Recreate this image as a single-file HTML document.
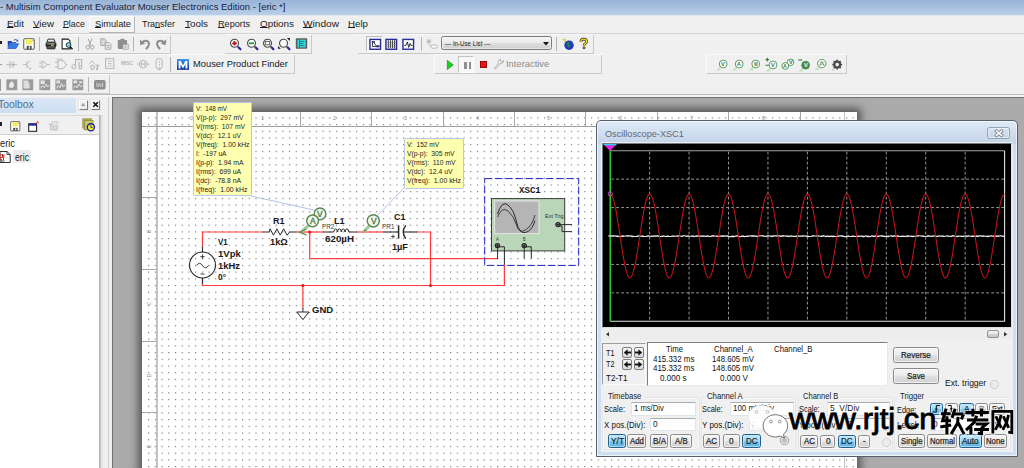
<!DOCTYPE html>
<html>
<head>
<meta charset="utf-8">
<title>Multisim</title>
<style>
html,body{margin:0;padding:0;}
body{width:1024px;height:468px;overflow:hidden;background:#f0f0f0;font-family:"Liberation Sans",sans-serif;font-size:12px;color:#000;position:relative;}
svg{display:block;}
</style>
</head>
<body>
<!-- chrome -->
<div style="position:absolute;left:0.00px;top:0.00px;width:1024.00px;height:15.00px;background:linear-gradient(#98b3d6 0%,#a6bfde 45%,#b9d0e9 100%);"></div>
<span style="position:absolute;left:0.00px;top:1.56px;font-size:9.80px;line-height:9.80px;white-space:pre;color:#17213a;font-family:'Liberation Sans',sans-serif;transform-origin:0 50%;transform:scaleX(0.9689);">- Multisim Component Evaluator Mouser Electronics Edition - [eric *]</span>
<div style="position:absolute;left:0.00px;top:15.00px;width:1024.00px;height:1.00px;background:#dfe7f1;"></div>
<div style="position:absolute;left:0.00px;top:16.00px;width:1024.00px;height:17.00px;background:#f0f0f0;"></div>
<div style="position:absolute;left:89.00px;top:16.00px;width:46.00px;height:17.00px;background:#f4f4f4;box-sizing:border-box;border:1px solid;border-color:#fcfcfc #b5b5b5 #b5b5b5 #fcfcfc;"></div>
<span style="position:absolute;left:7.00px;top:18.76px;font-size:9.50px;line-height:9.50px;white-space:pre;color:#1c1c1c;font-family:'Liberation Sans',sans-serif;transform-origin:0 50%;transform:scaleX(1.0385);text-underline-offset:0.3px;text-decoration-thickness:.9px;text-decoration-color:#8c8c8c;"><u>E</u>dit</span>
<span style="position:absolute;left:33.00px;top:18.76px;font-size:9.50px;line-height:9.50px;white-space:pre;color:#1c1c1c;font-family:'Liberation Sans',sans-serif;transform-origin:0 50%;transform:scaleX(1.0284);text-underline-offset:0.3px;text-decoration-thickness:.9px;text-decoration-color:#8c8c8c;"><u>V</u>iew</span>
<span style="position:absolute;left:63.00px;top:18.76px;font-size:9.50px;line-height:9.50px;white-space:pre;color:#1c1c1c;font-family:'Liberation Sans',sans-serif;transform-origin:0 50%;transform:scaleX(0.9257);text-underline-offset:0.3px;text-decoration-thickness:.9px;text-decoration-color:#8c8c8c;"><u>P</u>lace</span>
<span style="position:absolute;left:95.00px;top:18.76px;font-size:9.50px;line-height:9.50px;white-space:pre;color:#1c1c1c;font-family:'Liberation Sans',sans-serif;transform-origin:0 50%;transform:scaleX(0.9740);text-underline-offset:0.3px;text-decoration-thickness:.9px;text-decoration-color:#8c8c8c;"><u>S</u>imulate</span>
<span style="position:absolute;left:142.00px;top:18.76px;font-size:9.50px;line-height:9.50px;white-space:pre;color:#1c1c1c;font-family:'Liberation Sans',sans-serif;transform-origin:0 50%;transform:scaleX(0.9424);text-underline-offset:0.3px;text-decoration-thickness:.9px;text-decoration-color:#8c8c8c;">Tra<u>n</u>sfer</span>
<span style="position:absolute;left:185.00px;top:18.76px;font-size:9.50px;line-height:9.50px;white-space:pre;color:#1c1c1c;font-family:'Liberation Sans',sans-serif;transform-origin:0 50%;transform:scaleX(1.0371);text-underline-offset:0.3px;text-decoration-thickness:.9px;text-decoration-color:#8c8c8c;"><u>T</u>ools</span>
<span style="position:absolute;left:218.00px;top:18.76px;font-size:9.50px;line-height:9.50px;white-space:pre;color:#1c1c1c;font-family:'Liberation Sans',sans-serif;transform-origin:0 50%;transform:scaleX(0.9620);text-underline-offset:0.3px;text-decoration-thickness:.9px;text-decoration-color:#8c8c8c;"><u>R</u>eports</span>
<span style="position:absolute;left:260.00px;top:18.76px;font-size:9.50px;line-height:9.50px;white-space:pre;color:#1c1c1c;font-family:'Liberation Sans',sans-serif;transform-origin:0 50%;transform:scaleX(1.0385);text-underline-offset:0.3px;text-decoration-thickness:.9px;text-decoration-color:#8c8c8c;"><u>O</u>ptions</span>
<span style="position:absolute;left:303.00px;top:18.76px;font-size:9.50px;line-height:9.50px;white-space:pre;color:#1c1c1c;font-family:'Liberation Sans',sans-serif;transform-origin:0 50%;transform:scaleX(1.0654);text-underline-offset:0.3px;text-decoration-thickness:.9px;text-decoration-color:#8c8c8c;"><u>W</u>indow</span>
<span style="position:absolute;left:348.00px;top:18.76px;font-size:9.50px;line-height:9.50px;white-space:pre;color:#1c1c1c;font-family:'Liberation Sans',sans-serif;transform-origin:0 50%;transform:scaleX(1.0236);text-underline-offset:0.3px;text-decoration-thickness:.9px;text-decoration-color:#8c8c8c;"><u>H</u>elp</span>
<div style="position:absolute;left:0.00px;top:33.00px;width:1024.00px;height:1.00px;background:#d2d2d2;"></div>
<!-- toolbars -->
<div style="position:absolute;left:0.00px;top:34.00px;width:171.00px;height:20.00px;background:#f0f0f0;"></div>
<div style="position:absolute;left:0.00px;top:53.00px;width:171.00px;height:1.00px;background:#c9c9c9;"></div>
<div style="position:absolute;left:170.00px;top:34.00px;width:1.00px;height:20.00px;background:#c9c9c9;"></div>
<div style="position:absolute;left:0.00px;top:34.00px;width:171.00px;height:1.00px;background:#f9f9f9;"></div>
<div style="position:absolute;left:0.00px;top:41.00px;width:2.00px;height:3.00px;background:#222;"></div>
<svg style="position:absolute;left:6.50px;top:37.50px;overflow:visible" width="12.00" height="12.00" viewBox="0 0 16 16"><path d="M1 4h5l1 1.5h5V7H4L1 13z" fill="#1c3fb5"/><path d="M4.2 7.5H15.5L12 14H1z" fill="#2f7de6" stroke="#1c3fb5" stroke-width=".8"/><path d="M9 3q3-2.5 5 .5" fill="none" stroke="#2a55c8" stroke-width="1.3"/><path d="M15 1.5v3.3h-3.3z" fill="#2a55c8"/></svg>
<svg style="position:absolute;left:22.50px;top:38.30px;overflow:visible" width="12.00" height="12.00" viewBox="0 0 16 16"><rect x="1" y="1" width="14" height="14" rx="1" fill="#fdfdfd" stroke="#555" stroke-width="1.3"/><rect x="4" y="1.5" width="8.5" height="7" fill="#f3ef5b"/><rect x="5" y="10.5" width="6.5" height="4.5" fill="#444"/><rect x="7.5" y="11" width="2" height="3.5" fill="#ddd"/><rect x="13" y="2.5" width="1.3" height="1.3" fill="#e22"/></svg>
<div style="position:absolute;left:39.00px;top:37.00px;width:1.00px;height:14.00px;background:#b4b4b4;"></div>
<svg style="position:absolute;left:44.70px;top:37.70px;overflow:visible" width="12.00" height="12.00" viewBox="0 0 16 16"><path d="M4 1.5h8l1.5 4h-11z" fill="#e8e8e8" stroke="#222" stroke-width="1.2"/><rect x="0.8" y="5.5" width="14.4" height="6.5" rx="2" fill="#2c2c2c"/><rect x="2.5" y="10" width="11" height="4.5" rx="1" fill="#555" stroke="#1a1a1a" stroke-width="1"/><rect x="8" y="8.8" width="3.5" height="1.6" fill="#e9d92a"/><rect x="3" y="7.3" width="10" height="1" fill="#ddd"/></svg>
<svg style="position:absolute;left:61.00px;top:38.30px;overflow:visible" width="12.00" height="12.00" viewBox="0 0 16 16"><path d="M1.5 1.5h8l2.5 2.5v10.5h-10.5z" fill="#fff" stroke="#1a1a1a" stroke-width="1.4"/><circle cx="10" cy="9.3" r="3.2" fill="#5fe0e6" stroke="#333" stroke-width="1.3"/><path d="M12.3 11.8l3 3.2" stroke="#111" stroke-width="2"/></svg>
<div style="position:absolute;left:77.50px;top:37.00px;width:1.00px;height:14.00px;background:#b4b4b4;"></div>
<svg style="position:absolute;left:83.80px;top:38.00px;overflow:visible" width="12.00" height="12.00" viewBox="0 0 16 16"><path d="M5.5 1l3.5 9M10.5 1L7 10" stroke="#9b9b9b" stroke-width="1.2" fill="none"/><ellipse cx="5" cy="12.3" rx="2.2" ry="2.6" fill="none" stroke="#9b9b9b" stroke-width="1.2"/><ellipse cx="11" cy="12.3" rx="2.2" ry="2.6" fill="none" stroke="#9b9b9b" stroke-width="1.2"/></svg>
<svg style="position:absolute;left:100.20px;top:38.00px;overflow:visible" width="12.00" height="12.00" viewBox="0 0 16 16"><path d="M1 1h5l2 2v7h-7z" fill="#d9d9d9" stroke="#9b9b9b" stroke-width="1.1"/><path d="M7 6h5l2.5 2.5V15H7z" fill="#e6e6e6" stroke="#9b9b9b" stroke-width="1.1"/><path d="M9 10h3.5M9 12.3h3.5" stroke="#9b9b9b" stroke-width="1"/></svg>
<svg style="position:absolute;left:116.50px;top:38.20px;overflow:visible" width="12.00" height="12.00" viewBox="0 0 16 16"><rect x="1" y="2.5" width="12.5" height="12" rx="1.5" fill="#8f8f8f"/><rect x="4.5" y="1" width="5.5" height="3" rx="1" fill="#8f8f8f"/><rect x="8" y="8.5" width="7" height="6.5" fill="#e9e9e9" stroke="#a3a3a3" stroke-width="1"/><path d="M9.5 11h4M9.5 13h4" stroke="#a9a9a9" stroke-width=".9"/></svg>
<div style="position:absolute;left:133.00px;top:37.00px;width:1.00px;height:14.00px;background:#b4b4b4;"></div>
<svg style="position:absolute;left:138.50px;top:38.20px;overflow:visible" width="12.00" height="12.00" viewBox="0 0 16 16"><path d="M3.5 6.5C8 1.5 14.5 4 13 9.5 12.3 12 10.5 13.5 9 14.8" fill="none" stroke="#8d8d8d" stroke-width="2.6"/><path d="M0.8 2l1 7.5 6.8-2.3z" fill="#8d8d8d"/></svg>
<svg style="position:absolute;left:155.30px;top:38.20px;overflow:visible" width="12.00" height="12.00" viewBox="0 0 16 16"><path d="M12.5 6.5C8 1.5 1.5 4 3 9.5 3.7 12 5.5 13.5 7 14.8" fill="none" stroke="#8d8d8d" stroke-width="2.6"/><path d="M15.2 2l-1 7.5-6.8-2.3z" fill="#8d8d8d"/></svg>
<div style="position:absolute;left:225.00px;top:34.00px;width:87.00px;height:20.00px;background:#f0f0f0;"></div>
<div style="position:absolute;left:225.00px;top:53.00px;width:87.00px;height:1.00px;background:#c9c9c9;"></div>
<div style="position:absolute;left:311.00px;top:34.00px;width:1.00px;height:20.00px;background:#c9c9c9;"></div>
<div style="position:absolute;left:225.00px;top:34.00px;width:87.00px;height:1.00px;background:#f9f9f9;"></div>
<svg style="position:absolute;left:229.30px;top:37.90px;overflow:visible" width="13.00" height="13.00" viewBox="0 0 16 16"><circle cx="6.8" cy="6.5" r="4.9" fill="#fafafa" stroke="#4a4a4a" stroke-width="1.4"/><path d="M4 6.5h5.6M6.8 3.7v5.6" stroke="#b0131d" stroke-width="2.2"/><path d="M10.3 10.3l2 2" stroke="#444" stroke-width="1.5"/><path d="M12 11.8l2.100 2.100" stroke="#2322a8" stroke-width="2.600" stroke-linecap="round"/></svg>
<svg style="position:absolute;left:245.70px;top:37.90px;overflow:visible" width="13.00" height="13.00" viewBox="0 0 16 16"><circle cx="6.8" cy="6.5" r="4.9" fill="#fafafa" stroke="#4a4a4a" stroke-width="1.4"/><path d="M3.8 6.5h6" stroke="#16a32c" stroke-width="2.2"/><path d="M10.3 10.3l2 2" stroke="#444" stroke-width="1.5"/><path d="M12 11.8l2.100 2.100" stroke="#2322a8" stroke-width="2.600" stroke-linecap="round"/></svg>
<svg style="position:absolute;left:262.00px;top:37.90px;overflow:visible" width="13.00" height="13.00" viewBox="0 0 16 16"><circle cx="6.8" cy="6.5" r="4.9" fill="#fafafa" stroke="#4a4a4a" stroke-width="1.4"/><rect x="4" y="4.4" width="5.5" height="4" fill="none" stroke="#555" stroke-width="1.1"/><path d="M10.3 10.3l2 2" stroke="#444" stroke-width="1.5"/><path d="M12 11.8l2.100 2.100" stroke="#2322a8" stroke-width="2.600" stroke-linecap="round"/></svg>
<svg style="position:absolute;left:278.30px;top:37.90px;overflow:visible" width="13.00" height="13.00" viewBox="0 0 16 16"><circle cx="6.8" cy="6.5" r="4.9" fill="#fafafa" stroke="#4a4a4a" stroke-width="1.4"/><path d="M11 0h3.6v3.6zM0 13.3v-3.4l3.4 3.4z" fill="#111"/><path d="M10.3 10.3l2 2" stroke="#444" stroke-width="1.5"/><path d="M12 11.8l2.100 2.100" stroke="#2322a8" stroke-width="2.600" stroke-linecap="round"/></svg>
<svg style="position:absolute;left:294.70px;top:37.40px;overflow:visible" width="13.00" height="13.00" viewBox="0 0 16 16"><rect x="1" y="1.5" width="14" height="13" rx="1.3" fill="#5c5c5c"/><rect x="3" y="3.3" width="10" height="9.4" fill="#35dfe0"/><path d="M5.5 3.5v9M5.5 5.5h6M5.5 8h5M5.5 10.5h6" stroke="#1b6d70" stroke-width="1.1" fill="none"/></svg>
<div style="position:absolute;left:358.00px;top:34.00px;width:236.00px;height:20.00px;background:#f0f0f0;"></div>
<div style="position:absolute;left:358.00px;top:53.00px;width:236.00px;height:1.00px;background:#c9c9c9;"></div>
<div style="position:absolute;left:593.00px;top:34.00px;width:1.00px;height:20.00px;background:#c9c9c9;"></div>
<div style="position:absolute;left:358.00px;top:34.00px;width:236.00px;height:1.00px;background:#f9f9f9;"></div>
<div style="position:absolute;left:366.00px;top:36.00px;width:17.00px;height:16.00px;background:#f6f6f6;box-sizing:border-box;border:1px solid;border-color:#bdbdbd #fff #fff #bdbdbd;"></div>
<svg style="position:absolute;left:368.75px;top:38.05px;overflow:visible" width="12.50" height="12.50" viewBox="0 0 16 16"><rect x="1.2" y="1.8" width="13.6" height="12.6" fill="#fff" stroke="#2a2a9c" stroke-width="1.8"/><rect x="3.5" y="4" width="4" height="2.2" fill="#1f2a8c"/><rect x="9.5" y="9.3" width="4" height="2.6" fill="#1f2a8c"/><path d="M4.5 6v5h5.5M6.5 6l3 4.5" stroke="#222" stroke-width="1.1" fill="none"/></svg>
<svg style="position:absolute;left:385.05px;top:37.75px;overflow:visible" width="12.50" height="12.50" viewBox="0 0 16 16"><rect x="1.2" y="1.8" width="13.6" height="12.6" fill="#f4f4f4" stroke="#2a2a9c" stroke-width="1.8"/><path d="M4.3 3v10M7 3v10M9.6 3v10M12.2 3v10" stroke="#333" stroke-width="1.2"/><path d="M2 5.5h12M2 8h12M2 10.6h12" stroke="#777" stroke-width=".7"/></svg>
<svg style="position:absolute;left:402.05px;top:37.75px;overflow:visible" width="12.50" height="12.50" viewBox="0 0 16 16"><rect x="1.2" y="1.8" width="13.6" height="12.6" fill="#fbfbfb" stroke="#2a2a9c" stroke-width="1.8"/><path d="M3 9.5h2l1.8-4.5 1.8 7 1.7-5 1.2 2.5h2" stroke="#222" stroke-width="1.2" fill="none"/></svg>
<div style="position:absolute;left:420.50px;top:37.00px;width:1.00px;height:14.00px;background:#b4b4b4;"></div>
<svg style="position:absolute;left:426.05px;top:38.05px;overflow:visible" width="12.50" height="12.50" viewBox="0 0 16 16"><path d="M3.5 1v7M0.5 4.5h6.5M1.3 2l4.4 5M5.7 2L1.3 7" stroke="#aaa" stroke-width=".9"/><rect x="6.5" y="9" width="8" height="4" rx=".8" fill="#f8f8f8" stroke="#b0b0b0" stroke-width="1"/><path d="M3.5 8.5l3 2" stroke="#aaa" stroke-width=".9"/></svg>
<div style="position:absolute;left:441.00px;top:36.30px;width:111.00px;height:13.60px;background:linear-gradient(#f4f4f4 0%,#ebebeb 50%,#dcdcdc 55%,#d0d0d0 100%);box-sizing:border-box;border:1px solid #7b7b7b;border-radius:2.5px;box-shadow:0 0 0 .6px #fafafa inset;"></div>
<span style="position:absolute;left:445.30px;top:40.83px;font-size:6.90px;line-height:6.90px;white-space:pre;color:#222;font-family:'Liberation Sans',sans-serif;transform-origin:0 50%;transform:scaleX(0.8953);">--- In-Use List ---</span>
<svg style="position:absolute;left:542.50px;top:42.00px;overflow:visible" width="6.00" height="3.60" viewBox="0 0 6 3.6"><path d="M0 0h6L3 3.6z" fill="#111"/></svg>
<div style="position:absolute;left:555.50px;top:37.00px;width:1.00px;height:14.00px;background:#b4b4b4;"></div>
<svg style="position:absolute;left:562.25px;top:38.35px;overflow:visible" width="12.50" height="12.50" viewBox="0 0 16 16"><circle cx="9" cy="9.2" r="6" fill="#1f35c4"/><path d="M6 6q2-2 4-.5l-1 2.5 2 1.5-1.5 3-2.5-1-1-3z" fill="#158a33"/><path d="M11.5 5.5l2 1.5-.5 2.5z" fill="#158a33"/><path d="M1.2 3.2q0-2 1.8-2t1.6 1.7q-.2 1-1.4 1.4v1" stroke="#e2c400" stroke-width="1.3" fill="none"/></svg>
<svg style="position:absolute;left:577.50px;top:38.40px;overflow:visible" width="11.60" height="11.60" viewBox="0 0 16 16"><path d="M4 5.2q0-3.6 4-3.6t3.9 3.3q0 1.8-2 2.8-1.6.9-1.6 2.8" stroke="#222" stroke-width="3.6" fill="none"/><circle cx="8.3" cy="13.6" r="1.9" fill="#222"/><path d="M4 5.2q0-3.6 4-3.6t3.9 3.3q0 1.8-2 2.8-1.6.9-1.6 2.8" stroke="#f2e316" stroke-width="1.9" fill="none"/><circle cx="8.3" cy="13.6" r="1" fill="#f2e316"/></svg>
<div style="position:absolute;left:0.00px;top:54.00px;width:295.00px;height:20.00px;background:#f0f0f0;"></div>
<div style="position:absolute;left:0.00px;top:73.00px;width:295.00px;height:1.00px;background:#c9c9c9;"></div>
<div style="position:absolute;left:294.00px;top:54.00px;width:1.00px;height:20.00px;background:#c9c9c9;"></div>
<div style="position:absolute;left:0.00px;top:54.00px;width:295.00px;height:1.00px;background:#f9f9f9;"></div>
<div style="position:absolute;left:0.00px;top:63.50px;width:1.50px;height:1.00px;background:#9b9b9b;"></div>
<svg style="position:absolute;left:5.96px;top:58.66px;overflow:visible" width="11.28" height="11.28" viewBox="0 0 16 16"><g opacity=".8"><path d="M0 8h16M5.5 3.5v9l5-4.5zM10.8 3.5v9" stroke="#9b9b9b" stroke-width="1" fill="none"/></g></svg>
<svg style="position:absolute;left:22.36px;top:58.66px;overflow:visible" width="11.28" height="11.28" viewBox="0 0 16 16"><g opacity=".8"><path d="M1 8h6M7 3v10M7 7l5-5M7 9l5 5M10 14h2.3v-2.3" stroke="#9b9b9b" stroke-width="1" fill="none"/></g></svg>
<svg style="position:absolute;left:38.66px;top:58.66px;overflow:visible" width="11.28" height="11.28" viewBox="0 0 16 16"><g opacity=".8"><path d="M0 5.5h4M0 10.5h4M4 3v10l8-5zM12 8h4M7 2.5v2.5M7 11v2.5" stroke="#9b9b9b" stroke-width="1" fill="none"/></g></svg>
<svg style="position:absolute;left:54.69px;top:58.19px;overflow:visible" width="12.22" height="12.22" viewBox="0 0 16 16"><g opacity=".8"><path d="M0 5.5h4M0 11.5h4M4 3h4q5 .5 6.5 5.5Q13 14 8 14H4zM14.5 8.5H16M3 .5v2M6 .5v2M9 .5v2" stroke="#9b9b9b" stroke-width="1.1" fill="none"/></g></svg>
<svg style="position:absolute;left:71.39px;top:58.19px;overflow:visible" width="12.22" height="12.22" viewBox="0 0 16 16"><g opacity=".8"><path d="M6 2h8v12H10.5M6 2v8M10.5 5v9" stroke="#9b9b9b" stroke-width="1.2" fill="none"/><ellipse cx="3.8" cy="11.5" rx="2.6" ry="2.8" fill="none" stroke="#9b9b9b" stroke-width="1.2"/><path d="M11 10h3" stroke="#9b9b9b" stroke-width="1"/></g></svg>
<svg style="position:absolute;left:87.89px;top:58.79px;overflow:visible" width="12.22" height="12.22" viewBox="0 0 16 16"><g opacity=".8"><path d="M1.5 7l4-5 3 4" stroke="#9b9b9b" stroke-width="1" fill="none"/><ellipse cx="5.8" cy="11" rx="2.2" ry="3" fill="none" stroke="#9b9b9b" stroke-width="1.3"/><path d="M9.5 8h5.5M12.2 8.5v6M11 14.5l2.3-5" stroke="#9b9b9b" stroke-width="1.2" fill="none"/></g></svg>
<svg style="position:absolute;left:104.36px;top:58.36px;overflow:visible" width="11.28" height="11.28" viewBox="0 0 16 16"><g opacity=".8"><rect x="2" y="1" width="12" height="14" fill="none" stroke="#9b9b9b" stroke-width="1.1"/><path d="M5.5 4.5h5M5.5 8h5M5.5 11.5h5M2 4.5h1.5M12.5 4.5H14M2 11.5h1.5M12.5 11.5H14" stroke="#9b9b9b" stroke-width="1"/></g></svg>
<span style="position:absolute;left:121.00px;top:61.16px;font-size:5.60px;line-height:5.60px;white-space:pre;color:#b4b4b4;font-weight:bold;font-family:'Liberation Sans',sans-serif;transform-origin:0 50%;transform:scaleX(0.8571);">MISC</span>
<svg style="position:absolute;left:136.69px;top:57.89px;overflow:visible" width="12.22" height="12.22" viewBox="0 0 16 16"><g opacity=".8"><circle cx="8" cy="8" r="5" fill="none" stroke="#9b9b9b" stroke-width="1.1"/><path d="M0 8h3M13 8h3M5.8 5.5v5M10.2 5.5v5M5.8 8h4.4" stroke="#9b9b9b" stroke-width="1.1"/></g></svg>
<svg style="position:absolute;left:152.89px;top:57.89px;overflow:visible" width="12.22" height="12.22" viewBox="0 0 16 16"><g opacity=".8"><rect x="4" y="1" width="8" height="13" rx="3" fill="none" stroke="#9b9b9b" stroke-width="1.1"/><path d="M8.5 4v2M8.5 7.5v2M8.5 11v1.5M6 15.3h4" stroke="#9b9b9b" stroke-width="1"/></g></svg>
<div style="position:absolute;left:170.00px;top:57.00px;width:1.00px;height:15.00px;background:#b4b4b4;"></div>
<svg style="position:absolute;left:176.70px;top:59.00px;overflow:visible" width="12.00" height="10.80" viewBox="0 0 12 10.8"><defs><linearGradient id="mg" x1="0" y1="0" x2="0" y2="1"><stop offset="0" stop-color="#3f9ae8"/><stop offset="1" stop-color="#0a2a9e"/></linearGradient></defs><rect width="12" height="10.8" fill="url(#mg)"/><path d="M1.6 9.4V2h2.1L6 6.2 8.3 2h2.1v7.4H8.5V5.3L6 9.4 3.5 5.3v4.1z" fill="#fff"/></svg>
<span style="position:absolute;left:192.70px;top:58.91px;font-size:9.80px;line-height:9.80px;white-space:pre;color:#1a1a1a;font-family:'Liberation Sans',sans-serif;transform-origin:0 50%;transform:scaleX(0.9521);">Mouser Product Finder</span>
<div style="position:absolute;left:434.00px;top:54.00px;width:168.00px;height:20.00px;background:#f0f0f0;"></div>
<div style="position:absolute;left:434.00px;top:73.00px;width:168.00px;height:1.00px;background:#c9c9c9;"></div>
<div style="position:absolute;left:601.00px;top:54.00px;width:1.00px;height:20.00px;background:#c9c9c9;"></div>
<div style="position:absolute;left:434.00px;top:54.00px;width:1.00px;height:20.00px;background:#fbfbfb;"></div>
<div style="position:absolute;left:434.00px;top:54.00px;width:168.00px;height:1.00px;background:#f9f9f9;"></div>
<svg style="position:absolute;left:447.30px;top:59.80px;overflow:visible" width="6.60" height="9.80" viewBox="0 0 6.6 9.8"><path d="M0.3 0.3L6.3 4.9 0.3 9.5z" fill="#18d020" stroke="#0a7a12" stroke-width=".6"/></svg>
<div style="position:absolute;left:458.30px;top:56.00px;width:16.00px;height:17.00px;background:#f7f7f7;box-sizing:border-box;border:1px solid;border-color:#c2c2c2 #fff #fff #c2c2c2;"></div>
<div style="position:absolute;left:464.40px;top:61.60px;width:2.20px;height:7.00px;background:#8f8f8f;"></div>
<div style="position:absolute;left:468.60px;top:61.60px;width:2.20px;height:7.00px;background:#8f8f8f;"></div>
<div style="position:absolute;left:479.60px;top:60.80px;width:7.40px;height:7.20px;background:#f01010;box-sizing:border-box;border:.7px solid #8d0b0b;"></div>
<svg style="position:absolute;left:492.55px;top:58.45px;overflow:visible" width="11.50" height="11.50" viewBox="0 0 16 16"><path d="M2 14.5l1.5 1 6-7.5q3.500 .8 5-2.500l.3-2-2.600 2.300-2-1.300.4-2.800q-3 .5-3.400 3.500l.4 1.800z" fill="#f4f4f4" stroke="#9a9a9a" stroke-width="1"/></svg>
<span style="position:absolute;left:506.40px;top:58.81px;font-size:9.60px;line-height:9.60px;white-space:pre;color:#8b8b8b;font-family:'Liberation Sans',sans-serif;transform-origin:0 50%;transform:scaleX(0.9777);">Interactive</span>
<div style="position:absolute;left:706.00px;top:54.00px;width:141.00px;height:20.00px;background:#f0f0f0;"></div>
<div style="position:absolute;left:706.00px;top:73.00px;width:141.00px;height:1.00px;background:#c9c9c9;"></div>
<div style="position:absolute;left:846.00px;top:54.00px;width:1.00px;height:20.00px;background:#c9c9c9;"></div>
<div style="position:absolute;left:706.00px;top:54.00px;width:1.00px;height:20.00px;background:#fbfbfb;"></div>
<div style="position:absolute;left:706.00px;top:54.00px;width:141.00px;height:1.00px;background:#f9f9f9;"></div>
<svg style="position:absolute;left:0.00px;top:0.00px;overflow:visible" width="1024.00" height="468.00" viewBox="0 0 1024 468"><path d="M720.80 66.20l-5 4.200h4.600z" fill="#c3e2c0"/><circle cx="723.20" cy="64.00" r="3.90" fill="#fdfdfd" stroke="#4f9150" stroke-width=".9"/></svg>
<span style="position:absolute;left:721.30px;top:61.56px;font-size:5.30px;line-height:5.30px;white-space:pre;color:#3b7a3d;font-weight:bold;font-family:'Liberation Sans',sans-serif;transform-origin:0 50%;transform:scaleX(1.0749);">V</span>
<svg style="position:absolute;left:0.00px;top:0.00px;overflow:visible" width="1024.00" height="468.00" viewBox="0 0 1024 468"><path d="M736.80 66.20l-5 4.200h4.600z" fill="#c3e2c0"/><circle cx="739.20" cy="64.00" r="3.90" fill="#fdfdfd" stroke="#4f9150" stroke-width=".9"/></svg>
<span style="position:absolute;left:737.30px;top:61.56px;font-size:5.30px;line-height:5.30px;white-space:pre;color:#3b7a3d;font-weight:bold;font-family:'Liberation Sans',sans-serif;transform-origin:0 50%;transform:scaleX(0.9928);">A</span>
<svg style="position:absolute;left:0.00px;top:0.00px;overflow:visible" width="1024.00" height="468.00" viewBox="0 0 1024 468"><path d="M753.30 66.20l-5 4.200h4.600z" fill="#c3e2c0"/><circle cx="755.70" cy="64.00" r="3.90" fill="#fdfdfd" stroke="#4f9150" stroke-width=".9"/></svg>
<span style="position:absolute;left:753.80px;top:61.56px;font-size:5.30px;line-height:5.30px;white-space:pre;color:#3b7a3d;font-weight:bold;font-family:'Liberation Sans',sans-serif;transform-origin:0 50%;transform:scaleX(0.7597);">W</span>
<svg style="position:absolute;left:0.00px;top:0.00px;overflow:visible" width="1024.00" height="468.00" viewBox="0 0 1024 468"><path d="M770.60 67.20l-5 4.200h4.600z" fill="#c3e2c0"/><circle cx="773.00" cy="65.00" r="3.90" fill="#fdfdfd" stroke="#4f9150" stroke-width=".9"/></svg>
<span style="position:absolute;left:771.10px;top:62.56px;font-size:5.30px;line-height:5.30px;white-space:pre;color:#3b7a3d;font-weight:bold;font-family:'Liberation Sans',sans-serif;transform-origin:0 50%;transform:scaleX(1.0749);">V</span>
<svg style="position:absolute;left:0.00px;top:0.00px;overflow:visible" width="1024.00" height="468.00" viewBox="0 0 1024 468"><path d="M765.500 59.600h3.600M767.300 57.800v3.600M765.500 65.300h3.300" stroke="#2f7d32" stroke-width="1.1"/></svg>
<svg style="position:absolute;left:0.00px;top:0.00px;overflow:visible" width="1024.00" height="468.00" viewBox="0 0 1024 468"><circle cx="790.50" cy="62.30" r="3.30" fill="#fdfdfd" stroke="#4f9150" stroke-width=".9"/></svg>
<span style="position:absolute;left:788.60px;top:59.86px;font-size:5.30px;line-height:5.30px;white-space:pre;color:#3b7a3d;font-weight:bold;font-family:'Liberation Sans',sans-serif;transform-origin:0 50%;transform:scaleX(1.0749);">V</span>
<svg style="position:absolute;left:0.00px;top:0.00px;overflow:visible" width="1024.00" height="468.00" viewBox="0 0 1024 468"><circle cx="785.30" cy="66.00" r="3.40" fill="#fdfdfd" stroke="#4f9150" stroke-width=".9"/></svg>
<span style="position:absolute;left:783.40px;top:63.56px;font-size:5.30px;line-height:5.30px;white-space:pre;color:#3b7a3d;font-weight:bold;font-family:'Liberation Sans',sans-serif;transform-origin:0 50%;transform:scaleX(0.9928);">A</span>
<svg style="position:absolute;left:0.00px;top:0.00px;overflow:visible" width="1024.00" height="468.00" viewBox="0 0 1024 468"><path d="M798.300 60h3.800" stroke="#2f7d32" stroke-width="1.1"/></svg>
<svg style="position:absolute;left:0.00px;top:0.00px;overflow:visible" width="1024.00" height="468.00" viewBox="0 0 1024 468"><path d="M803.20 67.40l-5 4.200h4.600z" fill="#c3e2c0"/><circle cx="805.60" cy="65.20" r="3.90" fill="#4b8a4c" stroke="#4f9150" stroke-width=".9"/></svg>
<span style="position:absolute;left:803.70px;top:62.76px;font-size:5.30px;line-height:5.30px;white-space:pre;color:#fff;font-weight:bold;font-family:'Liberation Sans',sans-serif;transform-origin:0 50%;transform:scaleX(1.0749);">V</span>
<svg style="position:absolute;left:0.00px;top:0.00px;overflow:visible" width="1024.00" height="468.00" viewBox="0 0 1024 468"><path d="M819.40 65.80l-5 4.200h4.600z" fill="#c3e2c0"/><circle cx="821.80" cy="63.60" r="4.20" fill="#fdfdfd" stroke="#4f9150" stroke-width=".9"/></svg>
<span style="position:absolute;left:819.90px;top:61.16px;font-size:5.30px;line-height:5.30px;white-space:pre;color:#3b7a3d;font-weight:bold;font-family:'Liberation Sans',sans-serif;transform-origin:0 50%;transform:scaleX(1.0000);"></span>
<svg style="position:absolute;left:0.00px;top:0.00px;overflow:visible" width="1024.00" height="468.00" viewBox="0 0 1024 468"><path d="M819.300 65h1.600v-3h2v3h1.600" stroke="#3b7a3d" stroke-width=".8" fill="none"/></svg>
<svg style="position:absolute;left:0.00px;top:0.00px;overflow:visible" width="1024.00" height="468.00" viewBox="0 0 1024 468"><path d="M831.500 70.300l3-3-1 3.600z" fill="#b7dcb4"/><circle cx="837.200" cy="64.600" r="2.900" fill="none" stroke="#4a4a4a" stroke-width="2.200"/><path d="M840.50 64.60L842.10 64.60" stroke="#4a4a4a" stroke-width="1.700"/><path d="M839.53 66.93L840.66 68.06" stroke="#4a4a4a" stroke-width="1.700"/><path d="M837.20 67.90L837.20 69.50" stroke="#4a4a4a" stroke-width="1.700"/><path d="M834.87 66.93L833.74 68.06" stroke="#4a4a4a" stroke-width="1.700"/><path d="M833.90 64.60L832.30 64.60" stroke="#4a4a4a" stroke-width="1.700"/><path d="M834.87 62.27L833.74 61.14" stroke="#4a4a4a" stroke-width="1.700"/><path d="M837.20 61.30L837.20 59.70" stroke="#4a4a4a" stroke-width="1.700"/><path d="M839.53 62.27L840.66 61.14" stroke="#4a4a4a" stroke-width="1.700"/></svg>
<div style="position:absolute;left:0.00px;top:74.00px;width:110.00px;height:20.00px;background:#f0f0f0;"></div>
<div style="position:absolute;left:0.00px;top:93.00px;width:110.00px;height:1.00px;background:#c9c9c9;"></div>
<div style="position:absolute;left:109.00px;top:74.00px;width:1.00px;height:20.00px;background:#c9c9c9;"></div>
<div style="position:absolute;left:0.00px;top:74.00px;width:110.00px;height:1.00px;background:#f9f9f9;"></div>
<div style="position:absolute;left:0.00px;top:79.00px;width:1.00px;height:11.60px;background:#9a9a9a;"></div>
<svg style="position:absolute;left:6.20px;top:78.80px;overflow:visible" width="11.60" height="11.60" viewBox="0 0 16 16"><rect x="0.5" y="0.5" width="15" height="15" fill="#9a9a9a"/><path d="M4 11q0-7 4.500-8 4 3 2 8-3 2.500-6.500 0z" fill="#e9e9e9"/></svg>
<svg style="position:absolute;left:22.40px;top:78.80px;overflow:visible" width="11.60" height="11.60" viewBox="0 0 16 16"><rect x="0.5" y="0.5" width="15" height="15" fill="#9a9a9a"/><path d="M2 2h7l3 5-2 6H2z" fill="#dedede"/><path d="M9 2l4 12" stroke="#9a9a9a" stroke-width="1.500"/></svg>
<svg style="position:absolute;left:38.90px;top:78.80px;overflow:visible" width="11.60" height="11.60" viewBox="0 0 16 16"><rect x="0.5" y="0.5" width="15" height="15" fill="#9a9a9a"/><path d="M2 2h6v5H2z" fill="#e4e4e4"/><path d="M2 13l3-4 2.500 3 2.500-5 2 4 2-2.500" stroke="#ececec" stroke-width="1.300" fill="none"/></svg>
<svg style="position:absolute;left:55.20px;top:78.80px;overflow:visible" width="11.60" height="11.60" viewBox="0 0 16 16"><rect x="0.5" y="0.5" width="15" height="15" fill="#9a9a9a"/><path d="M2 2h5v4H2z" fill="#e4e4e4"/><path d="M2 13l2.500-4 2.500 3 2-6 2.500 5 2-3" stroke="#ececec" stroke-width="1.300" fill="none"/></svg>
<svg style="position:absolute;left:71.50px;top:78.80px;overflow:visible" width="11.60" height="11.60" viewBox="0 0 16 16"><rect x="0.5" y="0.5" width="15" height="15" fill="#9a9a9a"/><path d="M2 2h5v4H2zM10 3h4v3h-4z" fill="#e4e4e4"/><path d="M2 13l3-3.500 2 2.500 2.500-5 2.500 4 2-2" stroke="#ececec" stroke-width="1.300" fill="none"/></svg>
<div style="position:absolute;left:88.30px;top:77.00px;width:1.00px;height:15.00px;background:#b4b4b4;"></div>
<svg style="position:absolute;left:94.00px;top:78.80px;overflow:visible" width="11.60" height="11.60" viewBox="0 0 16 16"><rect x="0" y="1.500" width="16" height="13" rx="2.500" fill="#8d8d8d"/><path d="M4 5v6M6.500 11V7h3v4M12 5v6" stroke="#dcdcdc" stroke-width="1.200" fill="none"/></svg>
<div style="position:absolute;left:0.00px;top:94.00px;width:1024.00px;height:1.00px;background:#bdbdbd;"></div>
<div style="position:absolute;left:0.00px;top:95.00px;width:1024.00px;height:2.00px;background:#f4f4f4;"></div>
<!-- leftpanel -->
<div style="position:absolute;left:0.00px;top:97.00px;width:112.00px;height:371.00px;background:#f0f0f0;"></div>
<div style="position:absolute;left:0.00px;top:97.50px;width:76.00px;height:15.00px;background:linear-gradient(#dbe7f5,#cddef1);"></div>
<span style="position:absolute;left:-1.60px;top:98.73px;font-size:11.00px;line-height:11.00px;white-space:pre;color:#4d6d95;font-family:'Liberation Sans',sans-serif;transform-origin:0 50%;transform:scaleX(0.9442);">Toolbox</span>
<div style="position:absolute;left:78.50px;top:100.00px;width:9.80px;height:9.80px;background:#f0f0f0;box-sizing:border-box;border:1px solid;border-color:#fff #808080 #808080 #fff;box-shadow:0 0 0 .5px #d8d8d8;"></div>
<div style="position:absolute;left:90.60px;top:100.00px;width:9.80px;height:9.80px;background:#f0f0f0;box-sizing:border-box;border:1px solid;border-color:#fff #808080 #808080 #fff;box-shadow:0 0 0 .5px #d8d8d8;"></div>
<svg style="position:absolute;left:81.30px;top:103.20px;overflow:visible" width="4.40" height="3.00" viewBox="0 0 4.4 3"><path d="M0 3L2.200 0 4.400 3z" fill="#9c9c9c"/></svg>
<svg style="position:absolute;left:92.90px;top:102.40px;overflow:visible" width="5.20" height="5.00" viewBox="0 0 5.2 5"><path d="M0.300 0.300L4.900 4.700M4.900 0.300L0.300 4.700" stroke="#111" stroke-width="1.500"/></svg>
<div style="position:absolute;left:0.00px;top:115.00px;width:100.00px;height:353.00px;background:#f0f0f0;"></div>
<div style="position:absolute;left:0.00px;top:115.00px;width:100.00px;height:1.00px;background:#d9d9d9;"></div>
<div style="position:absolute;left:99.00px;top:115.00px;width:2.00px;height:353.00px;background:linear-gradient(90deg,#a8a8a8,#d2d2d2);"></div>
<div style="position:absolute;left:101.00px;top:115.00px;width:1.50px;height:353.00px;background:#e3e3e3;"></div>
<div style="position:absolute;left:0.00px;top:122.00px;width:2.00px;height:4.00px;background:#222;"></div>
<svg style="position:absolute;left:10.05px;top:120.65px;overflow:visible" width="10.50" height="10.50" viewBox="0 0 16 16"><rect x="1" y="1" width="14" height="14" rx="1" fill="#fdfdfd" stroke="#555" stroke-width="1.300"/><rect x="4" y="1.500" width="8.500" height="7" fill="#f3ef5b"/><rect x="5" y="10.500" width="6.500" height="4.500" fill="#444"/><rect x="7.500" y="11" width="2" height="3.500" fill="#ddd"/><rect x="13" y="2.500" width="1.300" height="1.300" fill="#e22"/></svg>
<svg style="position:absolute;left:27.50px;top:120.50px;overflow:visible" width="11.00" height="11.00" viewBox="0 0 16 16"><rect x="1" y="4" width="11.500" height="11" fill="#fff" stroke="#1a1a1a" stroke-width="1.500"/><rect x="1" y="4" width="11.500" height="2.800" fill="#1d2bb0"/><path d="M12 3.500l2-3 1.800 3" stroke="#d11" stroke-width="1.100" fill="none"/></svg>
<svg style="position:absolute;left:48.25px;top:120.55px;overflow:visible" width="10.50" height="10.50" viewBox="0 0 16 16"><rect x="6" y="1" width="9" height="13" fill="#e3e3e3" stroke="#c9c9c9" stroke-width="1"/><path d="M1 5h6M4 5v9" stroke="#bdbdbd" stroke-width="1.500"/><rect x="8" y="8" width="5" height="5" fill="none" stroke="#bcbcbc" stroke-width="1"/></svg>
<svg style="position:absolute;left:82.25px;top:118.45px;overflow:visible" width="13.50" height="13.50" viewBox="0 0 16 16"><rect x="1" y="1" width="10" height="11" fill="#b9b45a" stroke="#8d8a3c" stroke-width="1"/><rect x="3" y="3" width="10" height="11" fill="#c9c46a" stroke="#8d8a3c" stroke-width="1"/><circle cx="10.500" cy="11" r="4.200" fill="#f3e723" stroke="#1a22b0" stroke-width="1.600"/><path d="M10.500 8.500v2.800h2" stroke="#1a22b0" stroke-width="1" fill="none"/></svg>
<div style="position:absolute;left:0.00px;top:134.40px;width:99.00px;height:1.00px;background:#cfcfcf;"></div>
<div style="position:absolute;left:0.00px;top:135.00px;width:99.00px;height:333.00px;background:#fff;"></div>
<span style="position:absolute;left:-0.30px;top:138.42px;font-size:10.60px;line-height:10.60px;white-space:pre;color:#1a1a1a;font-family:'Liberation Sans',sans-serif;transform-origin:0 50%;transform:scaleX(0.8723);">eric</span>
<div style="position:absolute;left:13.20px;top:150.00px;width:17.40px;height:12.80px;background:#ececec;"></div>
<span style="position:absolute;left:15.00px;top:151.52px;font-size:10.60px;line-height:10.60px;white-space:pre;color:#1a1a1a;font-family:'Liberation Sans',sans-serif;transform-origin:0 50%;transform:scaleX(0.8196);">eric</span>
<svg style="position:absolute;left:0.00px;top:150.00px;overflow:visible" width="11.00" height="13.00" viewBox="0 0 11 13"><path d="M0 1.500h7l3.200 3v8H0z" fill="#fff" stroke="#333" stroke-width="1"/><path d="M7 1.500v3h3.200" fill="none" stroke="#333" stroke-width=".9"/><path d="M0 4.800h2.500v2.600H0M0 9.300h2" stroke="#d11" stroke-width="1" fill="none"/><path d="M4 4.500l-.6 5.500" stroke="#d11" stroke-width="1"/><path d="M2.800 4.200v1.500M1.200 10.500v1.200" stroke="#222" stroke-width=".8"/><path d="M1 10.500q2 1.500 3.500 0" stroke="#333" stroke-width=".9" fill="none"/></svg>
<div style="position:absolute;left:102.50px;top:97.00px;width:9.50px;height:371.00px;background:#f0f0f0;"></div>
<div style="position:absolute;left:107.60px;top:97.00px;width:1.00px;height:371.00px;background:#d0d0d0;"></div>
<!-- canvas -->
<div style="position:absolute;left:112.00px;top:97.00px;width:912.00px;height:371.00px;background:#ababab;"></div>
<div style="position:absolute;left:112.00px;top:97.00px;width:912.00px;height:1.30px;background:#707070;"></div>
<div style="position:absolute;left:112.00px;top:97.00px;width:1.30px;height:371.00px;background:#707070;"></div>
<div style="position:absolute;left:142.00px;top:111.60px;width:715.00px;height:360.00px;background:#fff;box-shadow:0 0 8px 4px rgba(55,55,55,.72);"></div>
<svg style="position:absolute;left:142px;top:112px" width="715" height="356" viewBox="142 112 715 356"><defs><pattern id="dots" x="148.10" y="117.35" width="6.710" height="6.705" patternUnits="userSpaceOnUse"><rect x="0" y="0" width="1.15" height="1.15" fill="#737373"/></pattern></defs><rect x="145" y="114" width="709" height="354" fill="url(#dots)"/></svg>
<div style="position:absolute;left:156.30px;top:112.00px;width:1.50px;height:356.00px;background:#c3c3c3;"></div>
<div style="position:absolute;left:843.50px;top:112.00px;width:1.50px;height:356.00px;background:#c3c3c3;"></div>
<div style="position:absolute;left:142.00px;top:126.00px;width:715.00px;height:1.00px;background:#9d9d9d;"></div>
<div style="position:absolute;left:228.00px;top:112.00px;width:1.20px;height:14.00px;background:#a8a8a8;"></div>
<div style="position:absolute;left:299.50px;top:112.00px;width:1.20px;height:14.00px;background:#a8a8a8;"></div>
<div style="position:absolute;left:370.90px;top:112.00px;width:1.20px;height:14.00px;background:#a8a8a8;"></div>
<div style="position:absolute;left:442.50px;top:112.00px;width:1.20px;height:14.00px;background:#a8a8a8;"></div>
<div style="position:absolute;left:513.80px;top:112.00px;width:1.20px;height:14.00px;background:#a8a8a8;"></div>
<div style="position:absolute;left:585.30px;top:112.00px;width:1.20px;height:14.00px;background:#a8a8a8;"></div>
<div style="position:absolute;left:656.80px;top:112.00px;width:1.20px;height:14.00px;background:#a8a8a8;"></div>
<div style="position:absolute;left:728.30px;top:112.00px;width:1.20px;height:14.00px;background:#a8a8a8;"></div>
<div style="position:absolute;left:799.80px;top:112.00px;width:1.20px;height:14.00px;background:#a8a8a8;"></div>
<div style="position:absolute;left:142.00px;top:197.10px;width:14.50px;height:1.20px;background:#a8a8a8;"></div>
<div style="position:absolute;left:844.00px;top:197.10px;width:13.00px;height:1.20px;background:#a8a8a8;"></div>
<div style="position:absolute;left:142.00px;top:269.10px;width:14.50px;height:1.20px;background:#a8a8a8;"></div>
<div style="position:absolute;left:844.00px;top:269.10px;width:13.00px;height:1.20px;background:#a8a8a8;"></div>
<div style="position:absolute;left:142.00px;top:340.70px;width:14.50px;height:1.20px;background:#a8a8a8;"></div>
<div style="position:absolute;left:844.00px;top:340.70px;width:13.00px;height:1.20px;background:#a8a8a8;"></div>
<div style="position:absolute;left:142.00px;top:412.30px;width:14.50px;height:1.20px;background:#a8a8a8;"></div>
<div style="position:absolute;left:844.00px;top:412.30px;width:13.00px;height:1.20px;background:#a8a8a8;"></div>
<span style="position:absolute;left:189.50px;top:115.76px;font-size:5.20px;line-height:5.20px;white-space:pre;color:#8a8a8a;font-family:'Liberation Sans',sans-serif;transform-origin:0 50%;transform:scaleX(1.0373);">0</span>
<span style="position:absolute;left:261.00px;top:115.76px;font-size:5.20px;line-height:5.20px;white-space:pre;color:#8a8a8a;font-family:'Liberation Sans',sans-serif;transform-origin:0 50%;transform:scaleX(1.0373);">1</span>
<span style="position:absolute;left:332.50px;top:115.76px;font-size:5.20px;line-height:5.20px;white-space:pre;color:#8a8a8a;font-family:'Liberation Sans',sans-serif;transform-origin:0 50%;transform:scaleX(1.0373);">2</span>
<span style="position:absolute;left:404.00px;top:115.76px;font-size:5.20px;line-height:5.20px;white-space:pre;color:#8a8a8a;font-family:'Liberation Sans',sans-serif;transform-origin:0 50%;transform:scaleX(1.0373);">3</span>
<span style="position:absolute;left:475.50px;top:115.76px;font-size:5.20px;line-height:5.20px;white-space:pre;color:#8a8a8a;font-family:'Liberation Sans',sans-serif;transform-origin:0 50%;transform:scaleX(1.0373);">4</span>
<span style="position:absolute;left:547.00px;top:115.76px;font-size:5.20px;line-height:5.20px;white-space:pre;color:#8a8a8a;font-family:'Liberation Sans',sans-serif;transform-origin:0 50%;transform:scaleX(1.0373);">5</span>
<span style="position:absolute;left:618.50px;top:115.76px;font-size:5.20px;line-height:5.20px;white-space:pre;color:#8a8a8a;font-family:'Liberation Sans',sans-serif;transform-origin:0 50%;transform:scaleX(1.0373);">6</span>
<span style="position:absolute;left:690.00px;top:115.76px;font-size:5.20px;line-height:5.20px;white-space:pre;color:#8a8a8a;font-family:'Liberation Sans',sans-serif;transform-origin:0 50%;transform:scaleX(1.0373);">7</span>
<span style="position:absolute;left:761.50px;top:115.76px;font-size:5.20px;line-height:5.20px;white-space:pre;color:#8a8a8a;font-family:'Liberation Sans',sans-serif;transform-origin:0 50%;transform:scaleX(1.0373);">8</span>
<span style="position:absolute;left:147.80px;top:157.30px;font-size:5.2px;line-height:5.2px;color:#8a8a8a;transform:rotate(-90deg);transform-origin:50% 50%;">A</span>
<span style="position:absolute;left:147.80px;top:229.00px;font-size:5.2px;line-height:5.2px;color:#8a8a8a;transform:rotate(-90deg);transform-origin:50% 50%;">B</span>
<span style="position:absolute;left:147.80px;top:300.80px;font-size:5.2px;line-height:5.2px;color:#8a8a8a;transform:rotate(-90deg);transform-origin:50% 50%;">C</span>
<span style="position:absolute;left:147.80px;top:372.50px;font-size:5.2px;line-height:5.2px;color:#8a8a8a;transform:rotate(-90deg);transform-origin:50% 50%;">D</span>
<span style="position:absolute;left:147.80px;top:443.50px;font-size:5.2px;line-height:5.2px;color:#8a8a8a;transform:rotate(-90deg);transform-origin:50% 50%;">E</span>
<svg style="position:absolute;left:0.00px;top:0.00px;overflow:visible" width="1024.00" height="468.00" viewBox="0 0 1024 468"><path d="M202.50 246.50 L202.50 232.00 L263.00 232.00" fill="none" stroke="#ff3d3d" stroke-width="1.20" /><path d="M296.00 232.00 L323.00 232.00" fill="none" stroke="#ff3d3d" stroke-width="1.20" /><path d="M356.70 232.00 L383.50 232.00" fill="none" stroke="#ff3d3d" stroke-width="1.20" /><path d="M417.00 232.00 L430.50 232.00 L430.50 285.50" fill="none" stroke="#ff3d3d" stroke-width="1.20" /><path d="M202.50 278.50 L202.50 285.50 L504.40 285.50 L504.40 264.50" fill="none" stroke="#ff3d3d" stroke-width="1.20" /><path d="M309.70 232.00 L309.70 258.70 L497.60 258.70" fill="none" stroke="#ff3d3d" stroke-width="1.20" /><path d="M302.90 285.50 L302.90 308.50" fill="none" stroke="#ff3d3d" stroke-width="1.20" /><circle cx="309.70" cy="232.00" r="1.6" fill="#e8131b"/><circle cx="302.90" cy="285.50" r="1.6" fill="#e8131b"/><circle cx="430.50" cy="285.50" r="1.6" fill="#e8131b"/><path d="M202.50 246.50 L202.50 252.00" fill="none" stroke="#2a2a2a" stroke-width="1.10" /><path d="M202.50 278.00 L202.50 283.80" fill="none" stroke="#2a2a2a" stroke-width="1.10" /><circle cx="202.5" cy="265" r="13" fill="none" stroke="#2a2a2a" stroke-width="1.1"/><path d="M200.30 256.70 L204.70 256.70" fill="none" stroke="#2a2a2a" stroke-width="0.90" /><path d="M202.50 254.50 L202.50 258.90" fill="none" stroke="#2a2a2a" stroke-width="0.90" /><path d="M200.50 274.00 L204.50 274.00" fill="none" stroke="#2a2a2a" stroke-width="0.90" /><path d="M196.5 265.500q3-4.500 6 0t6 0" fill="none" stroke="#2a2a2a" stroke-width=".9"/><path d="M263.00 232.00 L269.20 232.00 L270.05 228.80 L273.45 235.20 L276.85 228.80 L280.25 235.20 L283.65 228.80 L287.05 235.20 L289.60 232.00 L296.00 232.00" fill="none" stroke="#2a2a2a" stroke-width="1.00" /><path d="M323 232.00L333.800 232.00a1.88 3.300 0 0 1 3.75 0a1.88 3.300 0 0 1 3.75 0a1.88 3.300 0 0 1 3.75 0a1.88 3.300 0 0 1 3.75 0L356.700 232.00" fill="none" stroke="#2a2a2a" stroke-width="1"/><path d="M383.50 232.00 L398.60 232.00" fill="none" stroke="#2a2a2a" stroke-width="1.10" /><path d="M398.60 225.40 L398.60 238.60" fill="none" stroke="#2a2a2a" stroke-width="1.50" /><path d="M405.800 225.400q-5 6.600 0 13.200" fill="none" stroke="#2a2a2a" stroke-width="1.400"/><path d="M403.30 232.00 L417.00 232.00" fill="none" stroke="#2a2a2a" stroke-width="1.10" /><path d="M391.00 236.60 L395.00 236.60" fill="none" stroke="#2a2a2a" stroke-width="0.80" /><path d="M393.00 234.60 L393.00 238.60" fill="none" stroke="#2a2a2a" stroke-width="0.80" /><path d="M296.800 312h12.200l-6.100 7.500z" fill="#fff" stroke="#2a2a2a" stroke-width="1"/><path d="M302.90 308.00 L302.90 312.00" fill="none" stroke="#2a2a2a" stroke-width="1.00" /><path d="M251.00 196.00 L316.00 210.50" fill="none" stroke="#8fa6dd" stroke-width="0.70" /><path d="M404.00 188.00 L377.50 215.50" fill="none" stroke="#8fa6dd" stroke-width="0.70" /><path d="M309.500 224.800L301.500 231.600" stroke="#a3cc9a" stroke-width="3.200"/><path d="M306.300 229L299.600 232.200 306.500 235.200" fill="none" stroke="#5f9157" stroke-width="1.300"/><path d="M370 225L363.600 231.800" stroke="#a3cc9a" stroke-width="3.200"/><path d="M366.500 229.800L363.800 231.600" fill="none" stroke="#5f9157" stroke-width="1.200"/><circle cx="320.00" cy="213.90" r="5.90" fill="#f1f6ee" stroke="#5b8a54" stroke-width="1.450"/><circle cx="312.60" cy="220.80" r="5.90" fill="#f1f6ee" stroke="#5b8a54" stroke-width="1.450"/><circle cx="373.30" cy="220.80" r="6.10" fill="#f1f6ee" stroke="#5b8a54" stroke-width="1.450"/><rect x="484.700" y="178.600" width="94" height="86.800" fill="none" stroke="#2323c8" stroke-width="1" stroke-dasharray="7.600 2.600"/><rect x="491.500" y="198.600" width="73.200" height="52.300" fill="#b9d6b9" stroke="#3c3c3c" stroke-width="1"/><rect x="494.600" y="201" width="44.400" height="32.600" fill="#b5b5b5" stroke="#e6e6e6" stroke-width="1"/><path d="M497.500 214q4.500-14 10.500-9t8.500 17 9 10.500 9.500-12" fill="none" stroke="#1c1c1c" stroke-width=".9"/><path d="M497.500 217q4.500-11 10.500-6t8.500 14 9 5 9.500-15" fill="none" stroke="#222" stroke-width=".8"/><circle cx="497.40" cy="245.60" r="2.700" fill="#1e1e1e"/><circle cx="497.40" cy="245.60" r="1.300" fill="none" stroke="#9a9a9a" stroke-width=".6"/><circle cx="524.20" cy="245.60" r="2.700" fill="#1e1e1e"/><circle cx="524.20" cy="245.60" r="1.300" fill="none" stroke="#9a9a9a" stroke-width=".6"/><circle cx="558.00" cy="224.60" r="2.700" fill="#1e1e1e"/><circle cx="558.00" cy="224.60" r="1.300" fill="none" stroke="#9a9a9a" stroke-width=".6"/><path d="M497.60 245.60 L497.60 259.00" fill="none" stroke="#2a2a2a" stroke-width="1.00" /><path d="M499.00 246.80 L504.40 246.80 L504.40 264.50" fill="none" stroke="#2a2a2a" stroke-width="1.00" /><path d="M524.20 245.60 L524.20 258.50" fill="none" stroke="#2a2a2a" stroke-width="1.00" /><path d="M525.50 246.80 L531.30 246.80 L531.30 258.50" fill="none" stroke="#2a2a2a" stroke-width="1.00" /><path d="M558.00 224.60 L572.00 224.60" fill="none" stroke="#2a2a2a" stroke-width="1.00" /><path d="M559.50 226.00 L562.00 226.00 L562.00 231.60 L572.00 231.60" fill="none" stroke="#2a2a2a" stroke-width="1.00" /></svg>
<span style="position:absolute;left:217.90px;top:237.11px;font-size:9.40px;line-height:9.40px;white-space:pre;color:#1a1a1a;font-weight:bold;font-family:'Liberation Sans',sans-serif;transform-origin:0 50%;transform:scaleX(0.8349);">V1</span>
<span style="position:absolute;left:217.60px;top:249.21px;font-size:9.40px;line-height:9.40px;white-space:pre;color:#1a1a1a;font-weight:bold;font-family:'Liberation Sans',sans-serif;transform-origin:0 50%;transform:scaleX(1.0148);">1Vpk</span>
<span style="position:absolute;left:217.60px;top:260.51px;font-size:9.40px;line-height:9.40px;white-space:pre;color:#1a1a1a;font-weight:bold;font-family:'Liberation Sans',sans-serif;transform-origin:0 50%;transform:scaleX(1.0025);">1kHz</span>
<span style="position:absolute;left:217.60px;top:271.81px;font-size:9.40px;line-height:9.40px;white-space:pre;color:#1a1a1a;font-weight:bold;font-family:'Liberation Sans',sans-serif;transform-origin:0 50%;transform:scaleX(0.8901);">0°</span>
<span style="position:absolute;left:273.00px;top:215.71px;font-size:9.40px;line-height:9.40px;white-space:pre;color:#1a1a1a;font-weight:bold;font-family:'Liberation Sans',sans-serif;transform-origin:0 50%;transform:scaleX(0.9653);">R1</span>
<span style="position:absolute;left:269.80px;top:237.41px;font-size:9.40px;line-height:9.40px;white-space:pre;color:#1a1a1a;font-weight:bold;font-family:'Liberation Sans',sans-serif;transform-origin:0 50%;transform:scaleX(0.9948);">1kΩ</span>
<span style="position:absolute;left:333.80px;top:216.01px;font-size:9.40px;line-height:9.40px;white-space:pre;color:#1a1a1a;font-weight:bold;font-family:'Liberation Sans',sans-serif;transform-origin:0 50%;transform:scaleX(0.9754);">L1</span>
<span style="position:absolute;left:324.60px;top:234.21px;font-size:9.40px;line-height:9.40px;white-space:pre;color:#1a1a1a;font-weight:bold;font-family:'Liberation Sans',sans-serif;transform-origin:0 50%;transform:scaleX(1.0434);">620µH</span>
<span style="position:absolute;left:394.00px;top:212.11px;font-size:9.40px;line-height:9.40px;white-space:pre;color:#1a1a1a;font-weight:bold;font-family:'Liberation Sans',sans-serif;transform-origin:0 50%;transform:scaleX(0.9487);">C1</span>
<span style="position:absolute;left:392.00px;top:242.31px;font-size:9.40px;line-height:9.40px;white-space:pre;color:#1a1a1a;font-weight:bold;font-family:'Liberation Sans',sans-serif;transform-origin:0 50%;transform:scaleX(0.9764);">1µF</span>
<span style="position:absolute;left:311.60px;top:305.21px;font-size:9.40px;line-height:9.40px;white-space:pre;color:#1a1a1a;font-weight:bold;font-family:'Liberation Sans',sans-serif;transform-origin:0 50%;transform:scaleX(1.0149);">GND</span>
<span style="position:absolute;left:321.60px;top:224.07px;font-size:6.40px;line-height:6.40px;white-space:pre;color:#444;font-family:'Liberation Sans',sans-serif;transform-origin:0 50%;transform:scaleX(0.9799);">PR2</span>
<span style="position:absolute;left:381.50px;top:224.07px;font-size:6.40px;line-height:6.40px;white-space:pre;color:#444;font-family:'Liberation Sans',sans-serif;transform-origin:0 50%;transform:scaleX(1.0040);">PR1</span>
<span style="position:absolute;left:309.80px;top:216.90px;font-size:8.40px;line-height:8.40px;white-space:pre;color:#4d7c47;font-family:'Liberation Sans',sans-serif;transform-origin:0 50%;transform:scaleX(0.9995);-webkit-text-stroke:.35px #4d7c47;">A</span>
<span style="position:absolute;left:317.20px;top:210.00px;font-size:8.40px;line-height:8.40px;white-space:pre;color:#4d7c47;font-family:'Liberation Sans',sans-serif;transform-origin:0 50%;transform:scaleX(0.9995);-webkit-text-stroke:.35px #4d7c47;">V</span>
<span style="position:absolute;left:370.50px;top:216.80px;font-size:8.60px;line-height:8.60px;white-space:pre;color:#4d7c47;font-family:'Liberation Sans',sans-serif;transform-origin:0 50%;transform:scaleX(0.9762);-webkit-text-stroke:.35px #4d7c47;">V</span>
<span style="position:absolute;left:519.40px;top:185.91px;font-size:9.20px;line-height:9.20px;white-space:pre;color:#1a1a1a;font-weight:bold;font-family:'Liberation Mono',monospace;transform-origin:0 50%;transform:scaleX(0.9872);">XSC1</span>
<span style="position:absolute;left:545.20px;top:215.26px;font-size:4.80px;line-height:4.80px;white-space:pre;color:#333;font-family:'Liberation Sans',sans-serif;transform-origin:0 50%;transform:scaleX(1.1431);">Ext Trig</span>
<span style="position:absolute;left:496.00px;top:238.26px;font-size:4.80px;line-height:4.80px;white-space:pre;color:#333;font-family:'Liberation Sans',sans-serif;transform-origin:0 50%;transform:scaleX(0.8745);">A</span>
<span style="position:absolute;left:523.00px;top:238.26px;font-size:4.80px;line-height:4.80px;white-space:pre;color:#333;font-family:'Liberation Sans',sans-serif;transform-origin:0 50%;transform:scaleX(0.8121);">B</span>
<div style="position:absolute;left:193.00px;top:101.60px;width:58.50px;height:94.60px;background:#ffffb0;box-sizing:border-box;border:1px solid #b4c8e8;border-radius:1.500px;"></div>
<span style="position:absolute;left:196.00px;top:105.28px;font-size:7.00px;line-height:7.00px;white-space:pre;color:#222;font-family:'Liberation Sans',sans-serif;transform-origin:0 50%;transform:scaleX(0.9020);">V:  148 mV</span>
<span style="position:absolute;left:196.00px;top:114.22px;font-size:7.00px;line-height:7.00px;white-space:pre;color:#222;font-family:'Liberation Sans',sans-serif;transform-origin:0 50%;transform:scaleX(0.9614);">V(p-p):  297 mV</span>
<span style="position:absolute;left:196.00px;top:123.16px;font-size:7.00px;line-height:7.00px;white-space:pre;color:#222;font-family:'Liberation Sans',sans-serif;transform-origin:0 50%;transform:scaleX(0.9617);">V(rms):  107 mV</span>
<span style="position:absolute;left:196.00px;top:132.10px;font-size:7.00px;line-height:7.00px;white-space:pre;color:#222;font-family:'Liberation Sans',sans-serif;transform-origin:0 50%;transform:scaleX(0.9638);">V(dc):  12.1 uV</span>
<span style="position:absolute;left:196.00px;top:141.04px;font-size:7.00px;line-height:7.00px;white-space:pre;color:#222;font-family:'Liberation Sans',sans-serif;transform-origin:0 50%;transform:scaleX(0.9753);">V(freq):  1.00 kHz</span>
<span style="position:absolute;left:196.00px;top:149.98px;font-size:7.00px;line-height:7.00px;white-space:pre;color:#222;font-family:'Liberation Sans',sans-serif;transform-origin:0 50%;transform:scaleX(0.9444);">I:  -197 uA</span>
<span style="position:absolute;left:196.00px;top:158.92px;font-size:7.00px;line-height:7.00px;white-space:pre;color:#222;font-family:'Liberation Sans',sans-serif;transform-origin:0 50%;transform:scaleX(0.9768);">I(p-p):  1.94 mA</span>
<span style="position:absolute;left:196.00px;top:167.86px;font-size:7.00px;line-height:7.00px;white-space:pre;color:#222;font-family:'Liberation Sans',sans-serif;transform-origin:0 50%;transform:scaleX(0.9721);">I(rms):  699 uA</span>
<span style="position:absolute;left:196.00px;top:176.80px;font-size:7.00px;line-height:7.00px;white-space:pre;color:#222;font-family:'Liberation Sans',sans-serif;transform-origin:0 50%;transform:scaleX(0.9720);">I(dc):  -78.8 nA</span>
<span style="position:absolute;left:196.00px;top:185.74px;font-size:7.00px;line-height:7.00px;white-space:pre;color:#222;font-family:'Liberation Sans',sans-serif;transform-origin:0 50%;transform:scaleX(0.9880);">I(freq):  1.00 kHz</span>
<div style="position:absolute;left:403.80px;top:138.00px;width:59.80px;height:50.60px;background:#ffffb0;box-sizing:border-box;border:1px solid #b4c8e8;border-radius:1.500px;"></div>
<span style="position:absolute;left:407.30px;top:141.48px;font-size:7.00px;line-height:7.00px;white-space:pre;color:#222;font-family:'Liberation Sans',sans-serif;transform-origin:0 50%;transform:scaleX(0.9311);">V:  152 mV</span>
<span style="position:absolute;left:407.30px;top:150.48px;font-size:7.00px;line-height:7.00px;white-space:pre;color:#222;font-family:'Liberation Sans',sans-serif;transform-origin:0 50%;transform:scaleX(0.9614);">V(p-p):  305 mV</span>
<span style="position:absolute;left:407.30px;top:159.48px;font-size:7.00px;line-height:7.00px;white-space:pre;color:#222;font-family:'Liberation Sans',sans-serif;transform-origin:0 50%;transform:scaleX(0.9617);">V(rms):  110 mV</span>
<span style="position:absolute;left:407.30px;top:168.48px;font-size:7.00px;line-height:7.00px;white-space:pre;color:#222;font-family:'Liberation Sans',sans-serif;transform-origin:0 50%;transform:scaleX(0.9745);">V(dc):  12.4 uV</span>
<span style="position:absolute;left:407.30px;top:177.48px;font-size:7.00px;line-height:7.00px;white-space:pre;color:#222;font-family:'Liberation Sans',sans-serif;transform-origin:0 50%;transform:scaleX(0.9845);">V(freq):  1.00 kHz</span>
<!-- osc -->
<div style="position:absolute;left:596.30px;top:119.80px;width:421.40px;height:336.80px;background:linear-gradient(#dfeaf6 0px,#d0deef 12px,#c2d3e7 23px,#cfdef0 24px,#cfdef0 100%);box-sizing:border-box;border:1.300px solid #56606c;border-radius:5px 5px 0 0;box-shadow:0 0 0 1px rgba(255,255,255,.6) inset;"></div>
<span style="position:absolute;left:605.00px;top:129.01px;font-size:9.40px;line-height:9.40px;white-space:pre;color:#5e6b7a;font-family:'Liberation Sans',sans-serif;transform-origin:0 50%;transform:scaleX(0.9756);">Oscilloscope-XSC1</span>
<div style="position:absolute;left:987.30px;top:127.20px;width:23.20px;height:12.20px;background:linear-gradient(#d7e2ef,#c7d6e8);box-sizing:border-box;border:1px solid #93a4b8;border-radius:2.500px;box-shadow:0 0 0 .7px rgba(255,255,255,.6) inset;"></div>
<svg style="position:absolute;left:994.80px;top:130.00px;overflow:visible" width="8.00" height="6.60" viewBox="0 0 8 6.6"><path d="M1.500 1.200L6.500 5.400M6.500 1.200L1.500 5.400" stroke="#6b7682" stroke-width="3.100" stroke-linecap="square"/><path d="M1.500 1.200L6.500 5.400M6.500 1.200L1.500 5.400" stroke="#fff" stroke-width="1.700" stroke-linecap="square"/></svg>
<div style="position:absolute;left:602.00px;top:142.60px;width:410.20px;height:308.60px;background:#f0f0f0;box-shadow:0 0 0 .8px rgba(255,255,255,.7);"></div>
<div style="position:absolute;left:602.30px;top:143.30px;width:409.30px;height:184.90px;background:#000;box-sizing:border-box;border:1px solid;border-color:#7a7a7a #e0e0e0 #e0e0e0 #7a7a7a;"></div>
<svg style="position:absolute;left:0.00px;top:0.00px;overflow:visible" width="1024.00" height="468.00" viewBox="0 0 1024 468"><path d="M610.20 321.30V150.70H1004.60" fill="none" stroke="#a4a4a4" stroke-width="1.100"/><path d="M610.20 321.30H1004.60V150.70" fill="none" stroke="#e2e2e2" stroke-width="1.100"/><path d="M649.64 151.70V321.30" stroke="#b4b4b4" stroke-width=".85" stroke-dasharray="2.800 2.200"/><path d="M689.08 151.70V321.30" stroke="#b4b4b4" stroke-width=".85" stroke-dasharray="2.800 2.200"/><path d="M728.52 151.70V321.30" stroke="#b4b4b4" stroke-width=".85" stroke-dasharray="2.800 2.200"/><path d="M767.96 151.70V321.30" stroke="#b4b4b4" stroke-width=".85" stroke-dasharray="2.800 2.200"/><path d="M807.40 151.70V321.30" stroke="#b4b4b4" stroke-width=".85" stroke-dasharray="2.800 2.200"/><path d="M846.84 151.70V321.30" stroke="#b4b4b4" stroke-width=".85" stroke-dasharray="2.800 2.200"/><path d="M886.28 151.70V321.30" stroke="#b4b4b4" stroke-width=".85" stroke-dasharray="2.800 2.200"/><path d="M925.72 151.70V321.30" stroke="#b4b4b4" stroke-width=".85" stroke-dasharray="2.800 2.200"/><path d="M965.16 151.70V321.30" stroke="#b4b4b4" stroke-width=".85" stroke-dasharray="2.800 2.200"/><path d="M611.20 179.13H1004.60" stroke="#b4b4b4" stroke-width=".85" stroke-dasharray="2.800 2.200"/><path d="M611.20 207.57H1004.60" stroke="#b4b4b4" stroke-width=".85" stroke-dasharray="2.800 2.200"/><path d="M611.20 236.00H1004.60" stroke="#b4b4b4" stroke-width=".85" stroke-dasharray="2.800 2.200"/><path d="M611.20 264.43H1004.60" stroke="#b4b4b4" stroke-width=".85" stroke-dasharray="2.800 2.200"/><path d="M611.20 292.87H1004.60" stroke="#b4b4b4" stroke-width=".85" stroke-dasharray="2.800 2.200"/><path d="M610.300 150.70V321.30" stroke="#19d21f" stroke-width="1.100"/><path d="M608.2 235.96 L609.8 235.84 L611.4 236.11 L613.0 235.89 L614.6 235.81 L616.2 236.11 L617.8 236.58 L619.4 236.47 L621.0 236.44 L622.6 235.95 L624.2 236.23 L625.8 236.00 L627.4 235.91 L629.0 235.85 L630.6 235.94 L632.2 236.58 L633.8 236.50 L635.4 236.48 L637.0 236.47 L638.6 235.92 L640.2 236.03 L641.8 236.31 L643.4 236.41 L645.0 236.52 L646.6 236.54 L648.2 235.83 L649.8 236.30 L651.4 236.35 L653.0 236.21 L654.6 235.91 L656.2 236.18 L657.8 235.83 L659.4 236.59 L661.0 236.53 L662.6 236.24 L664.2 236.02 L665.8 236.57 L667.4 236.27 L669.0 236.54 L670.6 236.51 L672.2 236.21 L673.8 236.12 L675.4 236.29 L677.0 236.14 L678.6 235.90 L680.2 236.02 L681.8 236.48 L683.4 235.79 L685.0 235.79 L686.6 236.31 L688.2 236.00 L689.8 236.23 L691.4 236.17 L693.0 236.06 L694.6 236.65 L696.2 235.93 L697.8 236.12 L699.4 235.93 L701.0 236.32 L702.6 236.00 L704.2 236.07 L705.8 236.42 L707.4 236.04 L709.0 236.25 L710.6 236.56 L712.2 235.84 L713.8 235.81 L715.4 235.96 L717.0 236.44 L718.6 236.30 L720.2 235.96 L721.8 236.05 L723.4 235.91 L725.0 236.16 L726.6 235.79 L728.2 236.38 L729.8 236.56 L731.4 236.61 L733.0 236.41 L734.6 236.61 L736.2 235.77 L737.8 236.01 L739.4 236.62 L741.0 236.45 L742.6 236.12 L744.2 236.60 L745.8 236.31 L747.4 236.49 L749.0 236.01 L750.6 235.92 L752.2 236.15 L753.8 235.87 L755.4 236.09 L757.0 236.62 L758.6 236.05 L760.2 235.76 L761.8 235.79 L763.4 235.90 L765.0 236.46 L766.6 236.08 L768.2 236.01 L769.8 235.84 L771.4 236.63 L773.0 236.13 L774.6 235.94 L776.2 235.80 L777.8 235.80 L779.4 235.90 L781.0 236.36 L782.6 235.88 L784.2 235.79 L785.8 236.19 L787.4 235.97 L789.0 236.65 L790.6 235.86 L792.2 236.23 L793.8 236.45 L795.4 236.12 L797.0 236.64 L798.6 236.18 L800.2 235.97 L801.8 236.12 L803.4 235.78 L805.0 236.13 L806.6 235.97 L808.2 236.55 L809.8 236.50 L811.4 236.20 L813.0 235.78 L814.6 235.98 L816.2 235.97 L817.8 235.94 L819.4 235.96 L821.0 236.53 L822.6 235.88 L824.2 235.80 L825.8 236.59 L827.4 236.26 L829.0 236.64 L830.6 236.11 L832.2 236.56 L833.8 236.34 L835.4 236.46 L837.0 236.42 L838.6 236.19 L840.2 235.83 L841.8 235.94 L843.4 236.54 L845.0 236.56 L846.6 236.58 L848.2 236.05 L849.8 236.34 L851.4 236.47 L853.0 236.33 L854.6 236.48 L856.2 236.23 L857.8 236.34 L859.4 236.37 L861.0 235.99 L862.6 236.58 L864.2 236.61 L865.8 235.82 L867.4 236.62 L869.0 236.62 L870.6 236.35 L872.2 235.79 L873.8 236.56 L875.4 235.86 L877.0 236.62 L878.6 236.35 L880.2 235.80 L881.8 235.90 L883.4 236.32 L885.0 236.26 L886.6 236.42 L888.2 236.58 L889.8 235.95 L891.4 235.75 L893.0 236.58 L894.6 235.76 L896.2 236.54 L897.8 235.85 L899.4 236.48 L901.0 236.45 L902.6 236.54 L904.2 236.25 L905.8 236.54 L907.4 235.93 L909.0 236.35 L910.6 236.05 L912.2 236.55 L913.8 236.45 L915.4 236.17 L917.0 236.22 L918.6 235.77 L920.2 235.78 L921.8 236.29 L923.4 236.19 L925.0 236.53 L926.6 236.30 L928.2 235.87 L929.8 236.08 L931.4 236.44 L933.0 236.22 L934.6 235.76 L936.2 236.50 L937.8 236.49 L939.4 235.83 L941.0 236.24 L942.6 236.09 L944.2 236.46 L945.8 236.03 L947.4 235.96 L949.0 236.19 L950.6 236.62 L952.2 235.84 L953.8 235.85 L955.4 236.31 L957.0 236.55 L958.6 236.21 L960.2 236.14 L961.8 236.52 L963.4 236.45 L965.0 235.81 L966.6 236.54 L968.2 235.93 L969.8 236.02 L971.4 236.50 L973.0 236.13 L974.6 236.47 L976.2 235.90 L977.8 236.54 L979.4 235.91 L981.0 235.88 L982.6 236.19 L984.2 236.05 L985.8 236.24 L987.4 236.56 L989.0 236.39 L990.6 235.76 L992.2 236.03 L993.8 236.24 L995.4 236.19 L997.0 236.39 L998.6 236.19 L1000.2 235.82 L1001.8 235.97 L1003.4 236.51 L1005.0 236.07" fill="none" stroke="#e9e9e9" stroke-width="1.150"/><path d="M610.2 194.1 L611.0 194.4 L611.8 195.5 L612.6 197.1 L613.4 199.4 L614.2 202.3 L615.0 205.8 L615.8 209.7 L616.6 214.1 L617.4 218.8 L618.2 223.8 L619.0 229.0 L619.8 234.3 L620.6 239.6 L621.4 244.9 L622.2 250.0 L623.0 254.9 L623.8 259.5 L624.6 263.7 L625.4 267.5 L626.2 270.8 L627.0 273.4 L627.8 275.5 L628.6 277.0 L629.4 277.8 L630.2 277.9 L631.0 277.3 L631.8 276.0 L632.6 274.1 L633.4 271.6 L634.2 268.5 L635.0 264.9 L635.8 260.8 L636.6 256.3 L637.4 251.5 L638.2 246.4 L639.0 241.2 L639.8 235.9 L640.6 230.5 L641.4 225.3 L642.2 220.2 L643.0 215.4 L643.8 211.0 L644.6 206.9 L645.4 203.3 L646.2 200.2 L647.0 197.8 L647.8 195.9 L648.6 194.7 L649.4 194.1 L650.2 194.3 L651.0 195.1 L651.8 196.6 L652.6 198.7 L653.4 201.4 L654.2 204.7 L655.0 208.5 L655.8 212.7 L656.6 217.3 L657.4 222.2 L658.2 227.4 L659.0 232.7 L659.8 238.0 L660.6 243.3 L661.4 248.5 L662.2 253.5 L663.0 258.2 L663.8 262.5 L664.6 266.4 L665.4 269.8 L666.2 272.7 L667.0 275.0 L667.8 276.6 L668.6 277.6 L669.4 277.9 L670.2 277.5 L671.0 276.5 L671.8 274.8 L672.6 272.4 L673.4 269.5 L674.2 266.0 L675.0 262.1 L675.8 257.7 L676.6 253.0 L677.4 248.0 L678.2 242.8 L679.0 237.5 L679.8 232.1 L680.6 226.9 L681.4 221.7 L682.2 216.8 L683.0 212.3 L683.8 208.1 L684.6 204.3 L685.4 201.1 L686.2 198.4 L687.0 196.4 L687.8 195.0 L688.6 194.2 L689.4 194.2 L690.2 194.8 L691.0 196.0 L691.8 198.0 L692.6 200.5 L693.4 203.6 L694.2 207.3 L695.0 211.4 L695.8 215.9 L696.6 220.7 L697.4 225.8 L698.2 231.1 L699.0 236.4 L699.8 241.7 L700.6 247.0 L701.4 252.0 L702.2 256.8 L703.0 261.3 L703.8 265.3 L704.6 268.9 L705.4 271.9 L706.2 274.4 L707.0 276.2 L707.8 277.4 L708.6 277.9 L709.4 277.7 L710.2 276.9 L711.0 275.4 L711.8 273.2 L712.6 270.5 L713.4 267.1 L714.2 263.3 L715.0 259.1 L715.8 254.4 L716.6 249.5 L717.4 244.4 L718.2 239.1 L719.0 233.7 L719.8 228.4 L720.6 223.3 L721.4 218.3 L722.2 213.6 L723.0 209.3 L723.8 205.4 L724.6 202.0 L725.4 199.2 L726.2 196.9 L727.0 195.3 L727.8 194.4 L728.6 194.1 L729.4 194.5 L730.2 195.6 L731.0 197.3 L731.8 199.7 L732.6 202.6 L733.4 206.1 L734.2 210.1 L735.0 214.5 L735.8 219.3 L736.6 224.3 L737.4 229.5 L738.2 234.8 L739.0 240.1 L739.8 245.4 L740.6 250.5 L741.4 255.4 L742.2 260.0 L743.0 264.1 L743.8 267.8 L744.6 271.1 L745.4 273.7 L746.2 275.7 L747.0 277.1 L747.8 277.8 L748.6 277.8 L749.4 277.2 L750.2 275.9 L751.0 273.9 L751.8 271.3 L752.6 268.2 L753.4 264.5 L754.2 260.4 L755.0 255.9 L755.8 251.0 L756.6 245.9 L757.4 240.7 L758.2 235.3 L759.0 230.0 L759.8 224.8 L760.6 219.7 L761.4 215.0 L762.2 210.5 L763.0 206.5 L763.8 203.0 L764.6 200.0 L765.4 197.5 L766.2 195.7 L767.0 194.6 L767.8 194.1 L768.6 194.3 L769.4 195.2 L770.2 196.7 L771.0 198.9 L771.8 201.7 L772.6 205.0 L773.4 208.9 L774.2 213.2 L775.0 217.8 L775.8 222.7 L776.6 227.9 L777.4 233.2 L778.2 238.5 L779.0 243.8 L779.8 249.0 L780.6 254.0 L781.4 258.6 L782.2 262.9 L783.0 266.8 L783.8 270.1 L784.6 273.0 L785.4 275.2 L786.2 276.7 L787.0 277.7 L787.8 277.9 L788.6 277.5 L789.4 276.3 L790.2 274.6 L791.0 272.2 L791.8 269.2 L792.6 265.7 L793.4 261.7 L794.2 257.3 L795.0 252.5 L795.8 247.5 L796.6 242.3 L797.4 236.9 L798.2 231.6 L799.0 226.3 L799.8 221.2 L800.6 216.4 L801.4 211.8 L802.2 207.7 L803.0 204.0 L803.8 200.8 L804.6 198.2 L805.4 196.2 L806.2 194.9 L807.0 194.2 L807.8 194.2 L808.6 194.9 L809.4 196.2 L810.2 198.2 L811.0 200.8 L811.8 204.0 L812.6 207.7 L813.4 211.8 L814.2 216.4 L815.0 221.2 L815.8 226.3 L816.6 231.6 L817.4 236.9 L818.2 242.3 L819.0 247.5 L819.8 252.5 L820.6 257.3 L821.4 261.7 L822.2 265.7 L823.0 269.2 L823.8 272.2 L824.6 274.6 L825.4 276.3 L826.2 277.5 L827.0 277.9 L827.8 277.7 L828.6 276.7 L829.4 275.2 L830.2 273.0 L831.0 270.1 L831.8 266.8 L832.6 262.9 L833.4 258.6 L834.2 254.0 L835.0 249.0 L835.8 243.8 L836.6 238.5 L837.4 233.2 L838.2 227.9 L839.0 222.7 L839.8 217.8 L840.6 213.2 L841.4 208.9 L842.2 205.0 L843.0 201.7 L843.8 198.9 L844.6 196.7 L845.4 195.2 L846.2 194.3 L847.0 194.1 L847.8 194.6 L848.6 195.7 L849.4 197.5 L850.2 200.0 L851.0 203.0 L851.8 206.5 L852.6 210.5 L853.4 215.0 L854.2 219.7 L855.0 224.8 L855.8 230.0 L856.6 235.3 L857.4 240.7 L858.2 245.9 L859.0 251.0 L859.8 255.9 L860.6 260.4 L861.4 264.5 L862.2 268.2 L863.0 271.3 L863.8 273.9 L864.6 275.9 L865.4 277.2 L866.2 277.8 L867.0 277.8 L867.8 277.1 L868.6 275.7 L869.4 273.7 L870.2 271.1 L871.0 267.8 L871.8 264.1 L872.6 260.0 L873.4 255.4 L874.2 250.5 L875.0 245.4 L875.8 240.1 L876.6 234.8 L877.4 229.5 L878.2 224.3 L879.0 219.3 L879.8 214.5 L880.6 210.1 L881.4 206.1 L882.2 202.6 L883.0 199.7 L883.8 197.3 L884.6 195.6 L885.4 194.5 L886.2 194.1 L887.0 194.4 L887.8 195.3 L888.6 196.9 L889.4 199.2 L890.2 202.0 L891.0 205.4 L891.8 209.3 L892.6 213.6 L893.4 218.3 L894.2 223.3 L895.0 228.4 L895.8 233.7 L896.6 239.1 L897.4 244.4 L898.2 249.5 L899.0 254.4 L899.8 259.1 L900.6 263.3 L901.4 267.1 L902.2 270.5 L903.0 273.2 L903.8 275.4 L904.6 276.9 L905.4 277.7 L906.2 277.9 L907.0 277.4 L907.8 276.2 L908.6 274.4 L909.4 271.9 L910.2 268.9 L911.0 265.3 L911.8 261.3 L912.6 256.8 L913.4 252.0 L914.2 247.0 L915.0 241.7 L915.8 236.4 L916.6 231.1 L917.4 225.8 L918.2 220.7 L919.0 215.9 L919.8 211.4 L920.6 207.3 L921.4 203.6 L922.2 200.5 L923.0 198.0 L923.8 196.0 L924.6 194.8 L925.4 194.2 L926.2 194.2 L927.0 195.0 L927.8 196.4 L928.6 198.4 L929.4 201.1 L930.2 204.3 L931.0 208.1 L931.8 212.3 L932.6 216.8 L933.4 221.7 L934.2 226.9 L935.0 232.1 L935.8 237.5 L936.6 242.8 L937.4 248.0 L938.2 253.0 L939.0 257.7 L939.8 262.1 L940.6 266.0 L941.4 269.5 L942.2 272.4 L943.0 274.8 L943.8 276.5 L944.6 277.5 L945.4 277.9 L946.2 277.6 L947.0 276.6 L947.8 275.0 L948.6 272.7 L949.4 269.8 L950.2 266.4 L951.0 262.5 L951.8 258.2 L952.6 253.5 L953.4 248.5 L954.2 243.3 L955.0 238.0 L955.8 232.7 L956.6 227.4 L957.4 222.2 L958.2 217.3 L959.0 212.7 L959.8 208.5 L960.6 204.7 L961.4 201.4 L962.2 198.7 L963.0 196.6 L963.8 195.1 L964.6 194.3 L965.4 194.1 L966.2 194.7 L967.0 195.9 L967.8 197.8 L968.6 200.2 L969.4 203.3 L970.2 206.9 L971.0 211.0 L971.8 215.4 L972.6 220.2 L973.4 225.3 L974.2 230.5 L975.0 235.9 L975.8 241.2 L976.6 246.4 L977.4 251.5 L978.2 256.3 L979.0 260.8 L979.8 264.9 L980.6 268.5 L981.4 271.6 L982.2 274.1 L983.0 276.0 L983.8 277.3 L984.6 277.9 L985.4 277.8 L986.2 277.0 L987.0 275.5 L987.8 273.4 L988.6 270.8 L989.4 267.5 L990.2 263.7 L991.0 259.5 L991.8 254.9 L992.6 250.0 L993.4 244.9 L994.2 239.6 L995.0 234.3 L995.8 229.0 L996.6 223.8 L997.4 218.8 L998.2 214.1 L999.0 209.7 L999.8 205.8 L1000.6 202.3 L1001.4 199.4 L1002.2 197.1 L1003.0 195.5 L1003.8 194.4 L1004.6 194.1" fill="none" stroke="#c4141b" stroke-width="1.050" stroke-linejoin="round"/><path d="M603.500 144.300h13l-6.500 6.800z" fill="#f020e0"/><path d="M603.500 144h13v1.300h-13z" fill="#22d8e6"/><circle cx="610.300" cy="193.800" r="2.100" fill="none" stroke="#d24ae0" stroke-width=".9"/></svg>
<div style="position:absolute;left:602.00px;top:328.40px;width:410.00px;height:12.00px;background:#ededed;"></div>
<svg style="position:absolute;left:606.00px;top:332.20px;overflow:visible" width="3.00" height="4.40" viewBox="0 0 3 4.4"><path d="M3 0v4.400L0 2.200z" fill="#333"/></svg>
<svg style="position:absolute;left:1004.30px;top:332.00px;overflow:visible" width="3.30" height="4.40" viewBox="0 0 3.3 4.4"><path d="M0 0v4.400l3.300-2.200z" fill="#333"/></svg>
<div style="position:absolute;left:987.20px;top:330.20px;width:12.20px;height:7.90px;background:linear-gradient(#f4f4f4 0%,#e6e6e6 45%,#d2d2d2 55%,#c6c6c6 100%);box-sizing:border-box;border:1px solid #929292;border-radius:2px;"></div>
<div style="position:absolute;left:602.40px;top:342.60px;width:43.20px;height:42.80px;background:#f0f0f0;box-sizing:border-box;border:1px solid;border-color:#9c9c9c #fbfbfb #fbfbfb #9c9c9c;"></div>
<span style="position:absolute;left:606.00px;top:349.00px;font-size:8.60px;line-height:8.60px;white-space:pre;color:#111;font-family:'Liberation Sans',sans-serif;transform-origin:0 50%;transform:scaleX(0.8469);">T1</span>
<span style="position:absolute;left:606.00px;top:360.10px;font-size:8.60px;line-height:8.60px;white-space:pre;color:#111;font-family:'Liberation Sans',sans-serif;transform-origin:0 50%;transform:scaleX(0.8469);">T2</span>
<span style="position:absolute;left:606.00px;top:374.10px;font-size:8.60px;line-height:8.60px;white-space:pre;color:#111;font-family:'Liberation Sans',sans-serif;transform-origin:0 50%;transform:scaleX(0.9373);">T2-T1</span>
<div style="position:absolute;left:621.60px;top:346.80px;width:10.80px;height:11.20px;background:linear-gradient(#f7f7f7,#dadada);box-sizing:border-box;border:1px solid #7d7d7d;border-radius:2px;"></div>
<svg style="position:absolute;left:622.50px;top:348.90px;overflow:visible" width="9.00" height="7.00" viewBox="0 0 9 7"><path d="M8 3.500H3.500" stroke="#111" stroke-width="1.900"/><path d="M4.600 .3L.8 3.500 4.600 6.700z" fill="#111"/></svg>
<div style="position:absolute;left:633.50px;top:346.80px;width:10.80px;height:11.20px;background:linear-gradient(#f7f7f7,#dadada);box-sizing:border-box;border:1px solid #7d7d7d;border-radius:2px;"></div>
<svg style="position:absolute;left:634.40px;top:348.90px;overflow:visible" width="9.00" height="7.00" viewBox="0 0 9 7"><path d="M1 3.500H5.500" stroke="#111" stroke-width="1.900"/><path d="M4.400 .3L8.200 3.500 4.400 6.700z" fill="#111"/></svg>
<div style="position:absolute;left:621.60px;top:358.80px;width:10.80px;height:11.20px;background:linear-gradient(#f7f7f7,#dadada);box-sizing:border-box;border:1px solid #7d7d7d;border-radius:2px;"></div>
<svg style="position:absolute;left:622.50px;top:360.90px;overflow:visible" width="9.00" height="7.00" viewBox="0 0 9 7"><path d="M8 3.500H3.500" stroke="#111" stroke-width="1.900"/><path d="M4.600 .3L.8 3.500 4.600 6.700z" fill="#111"/></svg>
<div style="position:absolute;left:633.50px;top:358.80px;width:10.80px;height:11.20px;background:linear-gradient(#f7f7f7,#dadada);box-sizing:border-box;border:1px solid #7d7d7d;border-radius:2px;"></div>
<svg style="position:absolute;left:634.40px;top:360.90px;overflow:visible" width="9.00" height="7.00" viewBox="0 0 9 7"><path d="M1 3.500H5.500" stroke="#111" stroke-width="1.900"/><path d="M4.400 .3L8.200 3.500 4.400 6.700z" fill="#111"/></svg>
<div style="position:absolute;left:647.40px;top:342.40px;width:240.40px;height:43.80px;background:#fff;box-sizing:border-box;border:1px solid #e6e9ee;border-top:1.400px solid #7e7e7e;border-left:1.400px solid #7e7e7e;"></div>
<span style="position:absolute;left:665.50px;top:345.00px;font-size:8.60px;line-height:8.60px;white-space:pre;color:#111;font-family:'Liberation Sans',sans-serif;transform-origin:0 50%;transform:scaleX(0.9046);">Time</span>
<span style="position:absolute;left:714.00px;top:345.00px;font-size:8.60px;line-height:8.60px;white-space:pre;color:#111;font-family:'Liberation Sans',sans-serif;transform-origin:0 50%;transform:scaleX(0.9117);">Channel_A</span>
<span style="position:absolute;left:773.80px;top:345.00px;font-size:8.60px;line-height:8.60px;white-space:pre;color:#111;font-family:'Liberation Sans',sans-serif;transform-origin:0 50%;transform:scaleX(0.9070);">Channel_B</span>
<span style="position:absolute;left:652.60px;top:354.60px;font-size:8.60px;line-height:8.60px;white-space:pre;color:#111;font-family:'Liberation Sans',sans-serif;transform-origin:0 50%;transform:scaleX(0.9212);">415.332 ms</span>
<span style="position:absolute;left:652.60px;top:364.20px;font-size:8.60px;line-height:8.60px;white-space:pre;color:#111;font-family:'Liberation Sans',sans-serif;transform-origin:0 50%;transform:scaleX(0.9212);">415.332 ms</span>
<span style="position:absolute;left:659.50px;top:373.80px;font-size:8.60px;line-height:8.60px;white-space:pre;color:#111;font-family:'Liberation Sans',sans-serif;transform-origin:0 50%;transform:scaleX(0.9394);">0.000 s</span>
<span style="position:absolute;left:712.40px;top:354.60px;font-size:8.60px;line-height:8.60px;white-space:pre;color:#111;font-family:'Liberation Sans',sans-serif;transform-origin:0 50%;transform:scaleX(0.9056);">148.605 mV</span>
<span style="position:absolute;left:712.40px;top:364.20px;font-size:8.60px;line-height:8.60px;white-space:pre;color:#111;font-family:'Liberation Sans',sans-serif;transform-origin:0 50%;transform:scaleX(0.9056);">148.605 mV</span>
<span style="position:absolute;left:719.50px;top:373.80px;font-size:8.60px;line-height:8.60px;white-space:pre;color:#111;font-family:'Liberation Sans',sans-serif;transform-origin:0 50%;transform:scaleX(0.9444);">0.000 V</span>
<div style="position:absolute;left:893.20px;top:347.10px;width:46.00px;height:15.50px;background:linear-gradient(#f5f5f5 0%,#ececec 45%,#dedede 55%,#d1d1d1 100%);box-sizing:border-box;border:1px solid #8a8a8a;border-radius:2.500px;box-shadow:0 0 0 .7px #fbfbfb inset;"></div>
<span style="position:absolute;left:901.30px;top:350.55px;font-size:9.00px;line-height:9.00px;white-space:pre;color:#1a1a1a;font-family:'Liberation Sans',sans-serif;transform-origin:0 50%;transform:scaleX(0.8892);-webkit-text-stroke:.2px #1a1a1a;">Reverse</span>
<div style="position:absolute;left:893.20px;top:368.30px;width:46.00px;height:15.40px;background:linear-gradient(#f5f5f5 0%,#ececec 45%,#dedede 55%,#d1d1d1 100%);box-sizing:border-box;border:1px solid #8a8a8a;border-radius:2.500px;box-shadow:0 0 0 .7px #fbfbfb inset;"></div>
<span style="position:absolute;left:907.20px;top:371.70px;font-size:9.00px;line-height:9.00px;white-space:pre;color:#1a1a1a;font-family:'Liberation Sans',sans-serif;transform-origin:0 50%;transform:scaleX(0.8774);-webkit-text-stroke:.2px #1a1a1a;">Save</span>
<span style="position:absolute;left:945.20px;top:379.00px;font-size:8.60px;line-height:8.60px;white-space:pre;color:#111;font-family:'Liberation Sans',sans-serif;transform-origin:0 50%;transform:scaleX(0.9908);">Ext. trigger</span>
<svg style="position:absolute;left:989.50px;top:379.60px;overflow:visible" width="9.00" height="9.00" viewBox="0 0 9 9"><circle cx="4.500" cy="4.500" r="4.200" fill="#ebebeb" stroke="#cdcdcd" stroke-width="1"/></svg>
<div style="position:absolute;left:602.40px;top:396.80px;width:97.20px;height:52.80px;background:transparent;box-sizing:border-box;border:1px solid #e4e4e4;border-radius:3px;box-shadow:0 0 0 .5px #fbfbfb inset;"></div>
<div style="position:absolute;left:606.40px;top:395.80px;width:37.20px;height:3.00px;background:#f0f0f0;"></div>
<span style="position:absolute;left:608.40px;top:392.40px;font-size:8.60px;line-height:8.60px;white-space:pre;color:#1a1a1a;font-family:'Liberation Sans',sans-serif;transform-origin:0 50%;transform:scaleX(0.8867);">Timebase</span>
<div style="position:absolute;left:701.40px;top:396.80px;width:95.00px;height:52.80px;background:transparent;box-sizing:border-box;border:1px solid #e4e4e4;border-radius:3px;box-shadow:0 0 0 .5px #fbfbfb inset;"></div>
<div style="position:absolute;left:705.20px;top:395.80px;width:39.80px;height:3.00px;background:#f0f0f0;"></div>
<span style="position:absolute;left:707.20px;top:392.40px;font-size:8.60px;line-height:8.60px;white-space:pre;color:#1a1a1a;font-family:'Liberation Sans',sans-serif;transform-origin:0 50%;transform:scaleX(0.9020);">Channel A</span>
<div style="position:absolute;left:797.60px;top:396.80px;width:95.00px;height:52.80px;background:transparent;box-sizing:border-box;border:1px solid #e4e4e4;border-radius:3px;box-shadow:0 0 0 .5px #fbfbfb inset;"></div>
<div style="position:absolute;left:801.20px;top:395.80px;width:39.20px;height:3.00px;background:#f0f0f0;"></div>
<span style="position:absolute;left:803.20px;top:392.40px;font-size:8.60px;line-height:8.60px;white-space:pre;color:#1a1a1a;font-family:'Liberation Sans',sans-serif;transform-origin:0 50%;transform:scaleX(0.8764);">Channel B</span>
<div style="position:absolute;left:894.00px;top:396.80px;width:117.00px;height:52.80px;background:transparent;box-sizing:border-box;border:1px solid #e4e4e4;border-radius:3px;box-shadow:0 0 0 .5px #fbfbfb inset;"></div>
<div style="position:absolute;left:898.40px;top:395.80px;width:28.20px;height:3.00px;background:#f0f0f0;"></div>
<span style="position:absolute;left:900.40px;top:392.40px;font-size:8.60px;line-height:8.60px;white-space:pre;color:#1a1a1a;font-family:'Liberation Sans',sans-serif;transform-origin:0 50%;transform:scaleX(0.8989);">Trigger</span>
<span style="position:absolute;left:603.80px;top:405.40px;font-size:8.60px;line-height:8.60px;white-space:pre;color:#111;font-family:'Liberation Sans',sans-serif;transform-origin:0 50%;transform:scaleX(0.8827);">Scale:</span>
<div style="position:absolute;left:631.00px;top:402.20px;width:64.60px;height:13.40px;background:#fff;box-sizing:border-box;border:1px solid #e2e6ec;border-top-color:#a9acb2;"></div>
<span style="position:absolute;left:634.40px;top:404.40px;font-size:8.60px;line-height:8.60px;white-space:pre;color:#1a1a1a;font-family:'Liberation Sans',sans-serif;transform-origin:0 50%;transform:scaleX(0.8910);">1 ms/Div</span>
<span style="position:absolute;left:603.80px;top:420.80px;font-size:8.60px;line-height:8.60px;white-space:pre;color:#111;font-family:'Liberation Sans',sans-serif;transform-origin:0 50%;transform:scaleX(0.9216);">X pos.(Div):</span>
<div style="position:absolute;left:650.00px;top:418.00px;width:45.60px;height:13.40px;background:#fff;box-sizing:border-box;border:1px solid #e2e6ec;border-top-color:#a9acb2;"></div>
<span style="position:absolute;left:652.60px;top:420.20px;font-size:8.60px;line-height:8.60px;white-space:pre;color:#1a1a1a;font-family:'Liberation Sans',sans-serif;transform-origin:0 50%;transform:scaleX(0.9617);">0</span>
<div style="position:absolute;left:608.00px;top:434.40px;width:18.20px;height:13.20px;background:linear-gradient(#c9e9f9 0%,#a4d9f5 45%,#7cc5ee 55%,#58b0e3 100%);box-sizing:border-box;border:1px solid #245f8e;border-radius:2.500px;box-shadow:0 0 0 .7px #bfe6fa inset;"></div>
<span style="position:absolute;left:610.60px;top:436.70px;font-size:9.00px;line-height:9.00px;white-space:pre;color:#1a1a1a;font-family:'Liberation Sans',sans-serif;transform-origin:0 50%;transform:scaleX(0.9285);-webkit-text-stroke:.2px #1a1a1a;">Y/T</span>
<div style="position:absolute;left:627.40px;top:434.40px;width:19.00px;height:13.20px;background:linear-gradient(#f5f5f5 0%,#ececec 45%,#dedede 55%,#d1d1d1 100%);box-sizing:border-box;border:1px solid #8a8a8a;border-radius:2.500px;box-shadow:0 0 0 .7px #fbfbfb inset;"></div>
<span style="position:absolute;left:629.90px;top:436.70px;font-size:9.00px;line-height:9.00px;white-space:pre;color:#1a1a1a;font-family:'Liberation Sans',sans-serif;transform-origin:0 50%;transform:scaleX(0.8742);-webkit-text-stroke:.2px #1a1a1a;">Add</span>
<div style="position:absolute;left:649.80px;top:434.40px;width:18.60px;height:13.20px;background:linear-gradient(#f5f5f5 0%,#ececec 45%,#dedede 55%,#d1d1d1 100%);box-sizing:border-box;border:1px solid #8a8a8a;border-radius:2.500px;box-shadow:0 0 0 .7px #fbfbfb inset;"></div>
<span style="position:absolute;left:652.50px;top:436.70px;font-size:9.00px;line-height:9.00px;white-space:pre;color:#1a1a1a;font-family:'Liberation Sans',sans-serif;transform-origin:0 50%;transform:scaleX(0.9099);-webkit-text-stroke:.2px #1a1a1a;">B/A</span>
<div style="position:absolute;left:670.20px;top:434.40px;width:21.70px;height:13.20px;background:linear-gradient(#f5f5f5 0%,#ececec 45%,#dedede 55%,#d1d1d1 100%);box-sizing:border-box;border:1px solid #8a8a8a;border-radius:2.500px;box-shadow:0 0 0 .7px #fbfbfb inset;"></div>
<span style="position:absolute;left:674.75px;top:436.70px;font-size:9.00px;line-height:9.00px;white-space:pre;color:#1a1a1a;font-family:'Liberation Sans',sans-serif;transform-origin:0 50%;transform:scaleX(0.8686);-webkit-text-stroke:.2px #1a1a1a;">A/B</span>
<span style="position:absolute;left:702.30px;top:405.40px;font-size:8.60px;line-height:8.60px;white-space:pre;color:#111;font-family:'Liberation Sans',sans-serif;transform-origin:0 50%;transform:scaleX(0.8618);">Scale:</span>
<div style="position:absolute;left:730.00px;top:402.20px;width:63.60px;height:13.40px;background:#fff;box-sizing:border-box;border:1px solid #e2e6ec;border-top-color:#a9acb2;"></div>
<span style="position:absolute;left:733.00px;top:404.40px;font-size:8.60px;line-height:8.60px;white-space:pre;color:#1a1a1a;font-family:'Liberation Sans',sans-serif;transform-origin:0 50%;transform:scaleX(0.9224);">100 mV/Div</span>
<span style="position:absolute;left:702.30px;top:420.80px;font-size:8.60px;line-height:8.60px;white-space:pre;color:#111;font-family:'Liberation Sans',sans-serif;transform-origin:0 50%;transform:scaleX(0.9271);">Y pos.(Div):</span>
<div style="position:absolute;left:749.00px;top:418.00px;width:44.60px;height:13.40px;background:#fff;box-sizing:border-box;border:1px solid #e2e6ec;border-top-color:#a9acb2;"></div>
<span style="position:absolute;left:751.60px;top:420.20px;font-size:8.60px;line-height:8.60px;white-space:pre;color:#1a1a1a;font-family:'Liberation Sans',sans-serif;transform-origin:0 50%;transform:scaleX(0.9617);">0</span>
<div style="position:absolute;left:703.40px;top:434.40px;width:17.00px;height:13.20px;background:linear-gradient(#f5f5f5 0%,#ececec 45%,#dedede 55%,#d1d1d1 100%);box-sizing:border-box;border:1px solid #8a8a8a;border-radius:2.500px;box-shadow:0 0 0 .7px #fbfbfb inset;"></div>
<span style="position:absolute;left:706.40px;top:436.70px;font-size:9.00px;line-height:9.00px;white-space:pre;color:#1a1a1a;font-family:'Liberation Sans',sans-serif;transform-origin:0 50%;transform:scaleX(0.8798);-webkit-text-stroke:.2px #1a1a1a;">AC</span>
<div style="position:absolute;left:722.60px;top:434.40px;width:17.40px;height:13.20px;background:linear-gradient(#f5f5f5 0%,#ececec 45%,#dedede 55%,#d1d1d1 100%);box-sizing:border-box;border:1px solid #8a8a8a;border-radius:2.500px;box-shadow:0 0 0 .7px #fbfbfb inset;"></div>
<span style="position:absolute;left:729.00px;top:436.70px;font-size:9.00px;line-height:9.00px;white-space:pre;color:#1a1a1a;font-family:'Liberation Sans',sans-serif;transform-origin:0 50%;transform:scaleX(0.9190);-webkit-text-stroke:.2px #1a1a1a;">0</span>
<div style="position:absolute;left:742.00px;top:434.40px;width:18.60px;height:13.20px;background:linear-gradient(#c9e9f9 0%,#a4d9f5 45%,#7cc5ee 55%,#58b0e3 100%);box-sizing:border-box;border:1px solid #245f8e;border-radius:2.500px;box-shadow:0 0 0 .7px #bfe6fa inset;"></div>
<span style="position:absolute;left:745.55px;top:436.70px;font-size:9.00px;line-height:9.00px;white-space:pre;color:#1a1a1a;font-family:'Liberation Sans',sans-serif;transform-origin:0 50%;transform:scaleX(0.8847);-webkit-text-stroke:.2px #1a1a1a;">DC</span>
<svg style="position:absolute;left:780.20px;top:436.20px;overflow:visible" width="9.00" height="9.00" viewBox="0 0 9 9"><circle cx="4.500" cy="4.500" r="4.200" fill="#e6e6e6" stroke="#a3a3a3" stroke-width="1"/><circle cx="4.500" cy="4.500" r="2.100" fill="#c4c4c4" stroke="#a9a9a9" stroke-width=".6"/></svg>
<span style="position:absolute;left:799.20px;top:405.40px;font-size:8.60px;line-height:8.60px;white-space:pre;color:#111;font-family:'Liberation Sans',sans-serif;transform-origin:0 50%;transform:scaleX(0.8618);">Scale:</span>
<div style="position:absolute;left:827.00px;top:402.20px;width:63.20px;height:13.40px;background:#fff;box-sizing:border-box;border:1px solid #e2e6ec;border-top-color:#a9acb2;"></div>
<span style="position:absolute;left:830.40px;top:404.40px;font-size:8.60px;line-height:8.60px;white-space:pre;color:#1a1a1a;font-family:'Liberation Sans',sans-serif;transform-origin:0 50%;transform:scaleX(0.9798);">5  V/Div</span>
<span style="position:absolute;left:799.20px;top:420.80px;font-size:8.60px;line-height:8.60px;white-space:pre;color:#111;font-family:'Liberation Sans',sans-serif;transform-origin:0 50%;transform:scaleX(0.9248);">Y pos.(Div):</span>
<div style="position:absolute;left:845.60px;top:418.00px;width:44.60px;height:13.40px;background:#fff;box-sizing:border-box;border:1px solid #e2e6ec;border-top-color:#a9acb2;"></div>
<span style="position:absolute;left:848.20px;top:420.20px;font-size:8.60px;line-height:8.60px;white-space:pre;color:#1a1a1a;font-family:'Liberation Sans',sans-serif;transform-origin:0 50%;transform:scaleX(0.9617);">0</span>
<div style="position:absolute;left:800.40px;top:435.00px;width:17.60px;height:13.20px;background:linear-gradient(#f5f5f5 0%,#ececec 45%,#dedede 55%,#d1d1d1 100%);box-sizing:border-box;border:1px solid #8a8a8a;border-radius:2.500px;box-shadow:0 0 0 .7px #fbfbfb inset;"></div>
<span style="position:absolute;left:803.70px;top:437.30px;font-size:9.00px;line-height:9.00px;white-space:pre;color:#1a1a1a;font-family:'Liberation Sans',sans-serif;transform-origin:0 50%;transform:scaleX(0.8798);-webkit-text-stroke:.2px #1a1a1a;">AC</span>
<div style="position:absolute;left:820.40px;top:435.00px;width:15.00px;height:13.20px;background:linear-gradient(#f5f5f5 0%,#ececec 45%,#dedede 55%,#d1d1d1 100%);box-sizing:border-box;border:1px solid #8a8a8a;border-radius:2.500px;box-shadow:0 0 0 .7px #fbfbfb inset;"></div>
<span style="position:absolute;left:825.60px;top:437.30px;font-size:9.00px;line-height:9.00px;white-space:pre;color:#1a1a1a;font-family:'Liberation Sans',sans-serif;transform-origin:0 50%;transform:scaleX(0.9190);-webkit-text-stroke:.2px #1a1a1a;">0</span>
<div style="position:absolute;left:837.60px;top:435.00px;width:18.60px;height:13.20px;background:linear-gradient(#c9e9f9 0%,#a4d9f5 45%,#7cc5ee 55%,#58b0e3 100%);box-sizing:border-box;border:1px solid #245f8e;border-radius:2.500px;box-shadow:0 0 0 .7px #bfe6fa inset;"></div>
<span style="position:absolute;left:841.15px;top:437.30px;font-size:9.00px;line-height:9.00px;white-space:pre;color:#1a1a1a;font-family:'Liberation Sans',sans-serif;transform-origin:0 50%;transform:scaleX(0.8847);-webkit-text-stroke:.2px #1a1a1a;">DC</span>
<div style="position:absolute;left:858.20px;top:435.00px;width:12.00px;height:13.20px;background:linear-gradient(#f5f5f5 0%,#ececec 45%,#dedede 55%,#d1d1d1 100%);box-sizing:border-box;border:1px solid #8a8a8a;border-radius:2.500px;box-shadow:0 0 0 .7px #fbfbfb inset;"></div>
<span style="position:absolute;left:862.90px;top:437.30px;font-size:9.00px;line-height:9.00px;white-space:pre;color:#1a1a1a;font-family:'Liberation Sans',sans-serif;transform-origin:0 50%;transform:scaleX(0.8674);-webkit-text-stroke:.2px #1a1a1a;">-</span>
<svg style="position:absolute;left:881.60px;top:437.60px;overflow:visible" width="9.00" height="9.00" viewBox="0 0 9 9"><circle cx="4.500" cy="4.500" r="4.200" fill="#ebebeb" stroke="#d0d0d0" stroke-width="1"/></svg>
<span style="position:absolute;left:897.00px;top:405.60px;font-size:8.60px;line-height:8.60px;white-space:pre;color:#111;font-family:'Liberation Sans',sans-serif;transform-origin:0 50%;transform:scaleX(0.8632);">Edge:</span>
<div style="position:absolute;left:930.00px;top:403.00px;width:13.20px;height:12.40px;background:linear-gradient(#c9e9f9 0%,#a4d9f5 45%,#7cc5ee 55%,#58b0e3 100%);box-sizing:border-box;border:1px solid #245f8e;border-radius:2.500px;box-shadow:0 0 0 .7px #bfe6fa inset;"></div>
<div style="position:absolute;left:944.60px;top:403.00px;width:13.40px;height:12.40px;background:linear-gradient(#f5f5f5 0%,#ececec 45%,#dedede 55%,#d1d1d1 100%);box-sizing:border-box;border:1px solid #8a8a8a;border-radius:2.500px;box-shadow:0 0 0 .7px #fbfbfb inset;"></div>
<div style="position:absolute;left:959.40px;top:403.00px;width:14.20px;height:12.40px;background:linear-gradient(#c9e9f9 0%,#a4d9f5 45%,#7cc5ee 55%,#58b0e3 100%);box-sizing:border-box;border:1px solid #245f8e;border-radius:2.500px;box-shadow:0 0 0 .7px #bfe6fa inset;"></div>
<span style="position:absolute;left:963.70px;top:404.90px;font-size:9.00px;line-height:9.00px;white-space:pre;color:#1a1a1a;font-family:'Liberation Sans',sans-serif;transform-origin:0 50%;transform:scaleX(0.9328);-webkit-text-stroke:.2px #1a1a1a;">A</span>
<div style="position:absolute;left:975.00px;top:403.00px;width:13.00px;height:12.40px;background:linear-gradient(#f5f5f5 0%,#ececec 45%,#dedede 55%,#d1d1d1 100%);box-sizing:border-box;border:1px solid #8a8a8a;border-radius:2.500px;box-shadow:0 0 0 .7px #fbfbfb inset;"></div>
<span style="position:absolute;left:978.80px;top:404.90px;font-size:9.00px;line-height:9.00px;white-space:pre;color:#1a1a1a;font-family:'Liberation Sans',sans-serif;transform-origin:0 50%;transform:scaleX(0.8995);-webkit-text-stroke:.2px #1a1a1a;">B</span>
<div style="position:absolute;left:989.40px;top:403.00px;width:16.00px;height:12.40px;background:linear-gradient(#f5f5f5 0%,#ececec 45%,#dedede 55%,#d1d1d1 100%);box-sizing:border-box;border:1px solid #8a8a8a;border-radius:2.500px;box-shadow:0 0 0 .7px #fbfbfb inset;"></div>
<span style="position:absolute;left:992.10px;top:404.90px;font-size:9.00px;line-height:9.00px;white-space:pre;color:#1a1a1a;font-family:'Liberation Sans',sans-serif;transform-origin:0 50%;transform:scaleX(0.8152);-webkit-text-stroke:.2px #1a1a1a;">Ext</span>
<svg style="position:absolute;left:933.00px;top:405.40px;overflow:visible" width="7.00" height="7.60" viewBox="0 0 7 7.6"><path d="M0 7h3.300V.5H7" fill="none" stroke="#111" stroke-width="1"/><path d="M1.800 4.500l1.500-2.200 1.500 2.200z" fill="#111"/></svg>
<svg style="position:absolute;left:947.80px;top:405.40px;overflow:visible" width="7.00" height="7.60" viewBox="0 0 7 7.6"><path d="M0 .5h3.300V7H7" fill="none" stroke="#111" stroke-width="1"/><path d="M1.800 3l1.500 2.200L4.800 3z" fill="#111"/></svg>
<span style="position:absolute;left:897.00px;top:421.00px;font-size:8.60px;line-height:8.60px;white-space:pre;color:#111;font-family:'Liberation Sans',sans-serif;transform-origin:0 50%;transform:scaleX(0.9586);">Level:</span>
<div style="position:absolute;left:930.00px;top:418.00px;width:58.00px;height:13.40px;background:#fff;box-sizing:border-box;border:1px solid #e2e6ec;border-top-color:#a9acb2;"></div>
<span style="position:absolute;left:932.60px;top:420.20px;font-size:8.60px;line-height:8.60px;white-space:pre;color:#1a1a1a;font-family:'Liberation Sans',sans-serif;transform-origin:0 50%;transform:scaleX(0.9617);">0</span>
<span style="position:absolute;left:995.00px;top:421.00px;font-size:8.60px;line-height:8.60px;white-space:pre;color:#111;font-family:'Liberation Sans',sans-serif;transform-origin:0 50%;transform:scaleX(1.0459);">V</span>
<div style="position:absolute;left:898.00px;top:434.40px;width:27.20px;height:13.60px;background:linear-gradient(#f5f5f5 0%,#ececec 45%,#dedede 55%,#d1d1d1 100%);box-sizing:border-box;border:1px solid #8a8a8a;border-radius:2.500px;box-shadow:0 0 0 .7px #fbfbfb inset;"></div>
<span style="position:absolute;left:900.85px;top:436.90px;font-size:9.00px;line-height:9.00px;white-space:pre;color:#1a1a1a;font-family:'Liberation Sans',sans-serif;transform-origin:0 50%;transform:scaleX(0.8593);-webkit-text-stroke:.2px #1a1a1a;">Single</span>
<div style="position:absolute;left:927.40px;top:434.40px;width:29.80px;height:13.60px;background:linear-gradient(#f5f5f5 0%,#ececec 45%,#dedede 55%,#d1d1d1 100%);box-sizing:border-box;border:1px solid #8a8a8a;border-radius:2.500px;box-shadow:0 0 0 .7px #fbfbfb inset;"></div>
<span style="position:absolute;left:929.80px;top:436.90px;font-size:9.00px;line-height:9.00px;white-space:pre;color:#1a1a1a;font-family:'Liberation Sans',sans-serif;transform-origin:0 50%;transform:scaleX(0.8619);-webkit-text-stroke:.2px #1a1a1a;">Normal</span>
<div style="position:absolute;left:959.00px;top:434.40px;width:22.60px;height:13.60px;background:linear-gradient(#c9e9f9 0%,#a4d9f5 45%,#7cc5ee 55%,#58b0e3 100%);box-sizing:border-box;border:1px solid #245f8e;border-radius:2.500px;box-shadow:0 0 0 .7px #bfe6fa inset;"></div>
<span style="position:absolute;left:962.05px;top:436.90px;font-size:9.00px;line-height:9.00px;white-space:pre;color:#1a1a1a;font-family:'Liberation Sans',sans-serif;transform-origin:0 50%;transform:scaleX(0.8912);-webkit-text-stroke:.2px #1a1a1a;">Auto</span>
<div style="position:absolute;left:983.60px;top:434.40px;width:23.00px;height:13.60px;background:linear-gradient(#f5f5f5 0%,#ececec 45%,#dedede 55%,#d1d1d1 100%);box-sizing:border-box;border:1px solid #8a8a8a;border-radius:2.500px;box-shadow:0 0 0 .7px #fbfbfb inset;"></div>
<span style="position:absolute;left:985.85px;top:436.90px;font-size:9.00px;line-height:9.00px;white-space:pre;color:#1a1a1a;font-family:'Liberation Sans',sans-serif;transform-origin:0 50%;transform:scaleX(0.8598);-webkit-text-stroke:.2px #1a1a1a;">None</span>
<!-- watermark -->
<svg style="position:absolute;left:0.00px;top:0.00px;overflow:visible" width="1024.00" height="468.00" viewBox="0 0 1024 468"><path d="M762 405.300c-7.800 0-13.800 5.300-13.800 11.800 0 3.700 2 7 5.100 9.100l-1.500 4.800 5.200-2.900c1.600.5 3.200.8 5 .8 7.800 0 13.800-5.300 13.800-11.800s-6-11.800-13.800-11.800z" fill="#fff" fill-opacity=".93" stroke="#d8d8d8" stroke-width=".5"/><circle cx="756.500" cy="412" r="1.500" fill="#fff" stroke="#9a9a9a" stroke-width=".6"/><circle cx="767.600" cy="412" r="1.500" fill="#fff" stroke="#9a9a9a" stroke-width=".6"/><path d="M775.400 414.700c6.800 0 12.300 5 12.300 11.200 0 3.400-1.700 6.400-4.400 8.500l1.200 3.700-4.300-2c-1.500.6-3.100.9-4.800.9-6.800 0-12.300-5-12.300-11.200s5.500-11.100 12.300-11.100z" fill="#fff" stroke="#3a3a3a" stroke-width=".7"/><circle cx="771" cy="421.600" r="1.400" fill="#fff" stroke="#555" stroke-width=".6"/><circle cx="779.700" cy="421.600" r="1.400" fill="#fff" stroke="#555" stroke-width=".6"/></svg>
<span style="position:absolute;left:789.200px;top:405.28px;font-size:29.20px;line-height:29.20px;white-space:pre;font-family:'Liberation Sans',sans-serif;transform-origin:0 50%;transform:scaleX(1.0564);color:#fff;-webkit-text-stroke:2px rgba(255,255,255,.5);">www.rjtj.cn</span>
<span style="position:absolute;left:789.200px;top:405.28px;font-size:29.20px;line-height:29.20px;white-space:pre;font-family:'Liberation Sans',sans-serif;transform-origin:0 50%;transform:scaleX(1.0564);color:#000;-webkit-text-stroke:.9px #000;">www.rjtj.cn</span>
<svg style="position:absolute;left:939.80px;top:408.20px;overflow:visible" width="24.40" height="26.80" viewBox="0 0 24 26"><path d="M1.00 5.50 L10.50 5.50M6.00 0.50 L2.60 12.30 L10.80 12.30M0.30 18.60 L11.00 16.60M6.80 8.00 L6.80 26.00M15.00 0.50 L11.80 9.50M14.00 5.80 L23.30 5.80 L21.00 11.00M17.80 8.50 L17.30 14.50 L11.00 25.30M17.60 14.00 L23.80 25.30" fill="none" stroke="#fff" stroke-width="4.60" stroke-linecap="square" stroke-linejoin="miter" opacity=".5"/><path d="M1.00 5.50 L10.50 5.50M6.00 0.50 L2.60 12.30 L10.80 12.30M0.30 18.60 L11.00 16.60M6.80 8.00 L6.80 26.00M15.00 0.50 L11.80 9.50M14.00 5.80 L23.30 5.80 L21.00 11.00M17.80 8.50 L17.30 14.50 L11.00 25.30M17.60 14.00 L23.80 25.30" fill="none" stroke="#000" stroke-width="3.00" stroke-linecap="butt" stroke-linejoin="miter"/></svg>
<svg style="position:absolute;left:965.20px;top:408.20px;overflow:visible" width="24.40" height="26.80" viewBox="0 0 24 26"><path d="M0.50 4.30 L23.50 4.30M7.80 0.50 L7.80 8.30M16.20 0.50 L16.20 8.30M2.00 11.60 L23.00 11.60M11.50 7.50 L9.00 14.00 L1.00 21.50M5.80 16.50 L5.80 26.00M10.50 15.60 L21.00 15.60 L16.30 19.60M16.30 19.00 L16.30 25.00 L12.50 24.60M9.00 20.90 L23.60 20.90" fill="none" stroke="#fff" stroke-width="4.60" stroke-linecap="square" stroke-linejoin="miter" opacity=".5"/><path d="M0.50 4.30 L23.50 4.30M7.80 0.50 L7.80 8.30M16.20 0.50 L16.20 8.30M2.00 11.60 L23.00 11.60M11.50 7.50 L9.00 14.00 L1.00 21.50M5.80 16.50 L5.80 26.00M10.50 15.60 L21.00 15.60 L16.30 19.60M16.30 19.00 L16.30 25.00 L12.50 24.60M9.00 20.90 L23.60 20.90" fill="none" stroke="#000" stroke-width="3.00" stroke-linecap="butt" stroke-linejoin="miter"/></svg>
<svg style="position:absolute;left:991.40px;top:408.20px;overflow:visible" width="22.40" height="26.80" viewBox="0 0 24 26"><path d="M2.00 1.00 L2.00 26.00M2.00 2.20 L22.30 2.20 L22.30 25.00 L18.50 24.50M10.80 6.00 L8.80 14.00 L4.60 22.00M5.20 7.50 L11.00 20.00M18.80 6.00 L16.80 14.00 L12.60 22.00M13.20 7.50 L19.00 20.00" fill="none" stroke="#fff" stroke-width="4.60" stroke-linecap="square" stroke-linejoin="miter" opacity=".5"/><path d="M2.00 1.00 L2.00 26.00M2.00 2.20 L22.30 2.20 L22.30 25.00 L18.50 24.50M10.80 6.00 L8.80 14.00 L4.60 22.00M5.20 7.50 L11.00 20.00M18.80 6.00 L16.80 14.00 L12.60 22.00M13.20 7.50 L19.00 20.00" fill="none" stroke="#000" stroke-width="3.00" stroke-linecap="butt" stroke-linejoin="miter"/></svg>
</body>
</html>
